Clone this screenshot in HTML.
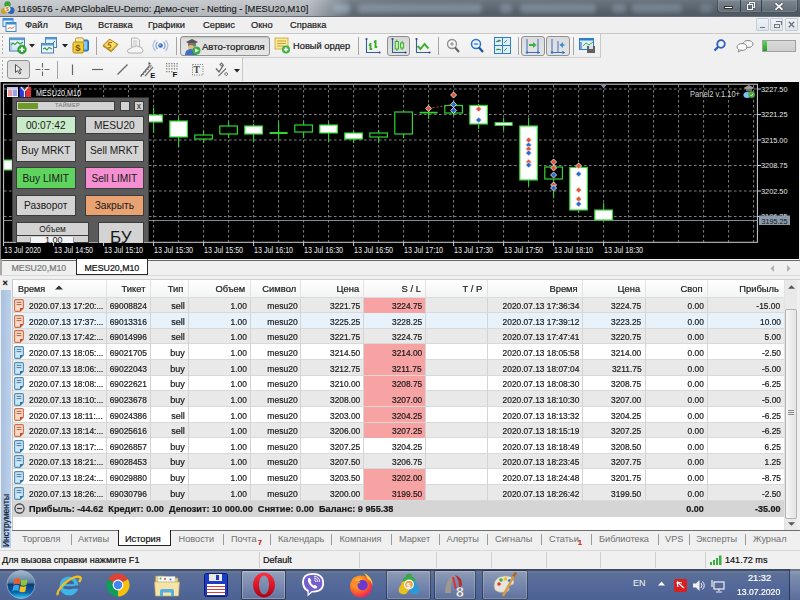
<!DOCTYPE html><html><head><meta charset="utf-8"><style>

*{box-sizing:border-box}
html,body{margin:0;padding:0;width:800px;height:600px;overflow:hidden;background:#f0f0f0;font-family:"Liberation Sans",sans-serif;color:#000}
.ab{position:absolute}
.t{position:absolute;white-space:pre;line-height:1;-webkit-text-stroke:0.22px currentColor}
svg{position:absolute;overflow:visible}

</style></head><body>
<div class="ab" style="left:0;top:0;width:800px;height:17px;background:linear-gradient(90deg,#c3c7cb 0px,#bec2c6 260px,#b2b8bd 310px,#8a939b 332px,#626d77 352px,#5a6570 420px,#57626c 600px,#535e69 800px)"></div>
<div class="ab" style="left:0;top:0;width:800px;height:17px;background:linear-gradient(180deg,rgba(255,255,255,0.12),rgba(0,0,0,0.04) 75%,rgba(0,0,0,0.08))"></div>
<div class="ab" style="left:0;top:15.5px;width:800px;height:1.5px;background:#686e76"></div>
<div class="ab" style="left:333px;top:4px;width:17px;height:9px;border-radius:4px;background:rgba(175,195,215,0.45);filter:blur(2.2px)"></div>
<div class="ab" style="left:358px;top:4px;width:124px;height:9px;border-radius:4px;background:rgba(175,195,215,0.38);filter:blur(2.2px)"></div>
<div class="ab" style="left:500px;top:4px;width:12px;height:9px;border-radius:4px;background:rgba(175,195,215,0.35);filter:blur(2.2px)"></div>
<div class="ab" style="left:520px;top:4px;width:76px;height:9px;border-radius:4px;background:rgba(175,195,215,0.35);filter:blur(2.2px)"></div>
<div class="ab" style="left:612px;top:4px;width:14px;height:9px;border-radius:4px;background:rgba(175,195,215,0.3);filter:blur(2.2px)"></div>
<div class="ab" style="left:632px;top:4px;width:50px;height:9px;border-radius:4px;background:rgba(175,195,215,0.3);filter:blur(2.2px)"></div>
<div class="ab" style="left:700px;top:4px;width:12px;height:9px;border-radius:4px;background:rgba(175,195,215,0.25);filter:blur(2.2px)"></div>
<div class="t" style="left:17px;top:5px;font-size:9.35px;color:#161616;-webkit-text-stroke:0.1px #161616">1169576 - AMPGlobalEU-Demo: Демо-счет - Netting - [MESU20,M10]</div>
<svg style="left:1px;top:1px" width="14" height="14" viewBox="0 0 14 14"><circle cx="3" cy="10" r="3" fill="#c9a227"/><circle cx="10" cy="9.5" r="3.5" fill="#2a64b8"/><circle cx="6.5" cy="3.5" r="3.2" fill="#3aa23a"/><circle cx="6.5" cy="8" r="3" fill="#f2e6c8"/><text x="5" y="10" font-size="5" fill="#c06020" font-family="Liberation Sans">$</text></svg>
<div class="ab" style="left:717px;top:0;width:81px;height:13px;border:1px solid rgba(40,50,60,0.6);border-top:none;border-radius:0 0 4px 4px;background:linear-gradient(180deg,#7d8791,#626c77);box-shadow:inset 0 0 0 1px rgba(255,255,255,0.12)"></div>
<div class="ab" style="left:740px;top:0;width:1px;height:12px;background:rgba(30,40,50,0.7)"></div>
<div class="ab" style="left:761px;top:0;width:1px;height:12px;background:rgba(30,40,50,0.7)"></div>
<div class="ab" style="left:724px;top:6px;width:9px;height:3px;background:#fff;border:1px solid #333"></div>
<div class="ab" style="left:749px;top:2px;width:6px;height:6px;border:1.3px solid #fff;box-shadow:0 0 1px #222"></div><div class="ab" style="left:747px;top:4px;width:6px;height:6px;border:1.3px solid #fff;background:#606a74;box-shadow:0 0 1px #222"></div>
<svg style="left:774px;top:2px" width="10" height="9"><path d="M1.5 1.2 L8.5 7.8 M8.5 1.2 L1.5 7.8" stroke="#3a424a" stroke-width="3.2"/><path d="M1.5 1.2 L8.5 7.8 M8.5 1.2 L1.5 7.8" stroke="#f4f4f4" stroke-width="1.9"/></svg>
<div class="ab" style="left:0;top:17px;width:800px;height:16px;background:#efeff0"></div>
<div class="ab" style="left:0;top:32.5px;width:800px;height:1.2px;background:#c8c8c8"></div>
<svg style="left:2px;top:18px" width="15" height="14" viewBox="0 0 15 14"><rect x="1" y="0.5" width="10" height="8" fill="#dff0fb" stroke="#3e8ad6"/><rect x="1" y="0.5" width="10" height="2" fill="#3e8ad6"/><rect x="4" y="4.5" width="10" height="9" fill="#fff" stroke="#3f8ad0"/><rect x="4" y="4.5" width="10" height="2" fill="#3f8ad0"/><path d="M5.5 11 L8 9.5 L10 10.5 L12.5 8.5" stroke="#e07040" fill="none"/></svg>
<div class="t" style="left:25px;top:21px;font-size:9.3px;color:#1e1e1e">Файл</div>
<div class="t" style="left:65px;top:21px;font-size:9.3px;color:#1e1e1e">Вид</div>
<div class="t" style="left:98px;top:21px;font-size:9.3px;color:#1e1e1e">Вставка</div>
<div class="t" style="left:148px;top:21px;font-size:9.3px;color:#1e1e1e">Графики</div>
<div class="t" style="left:203px;top:21px;font-size:9.3px;color:#1e1e1e">Сервис</div>
<div class="t" style="left:251px;top:21px;font-size:9.3px;color:#1e1e1e">Окно</div>
<div class="t" style="left:290px;top:21px;font-size:9.3px;color:#1e1e1e">Справка</div>
<div class="ab" style="left:756px;top:18px;width:13px;height:13px;background:linear-gradient(180deg,#eef3f8,#dbe5ee);border:1px solid #c3ccd6;border-radius:1px"></div>
<div class="ab" style="left:770px;top:18px;width:13px;height:13px;background:linear-gradient(180deg,#eef3f8,#dbe5ee);border:1px solid #c3ccd6;border-radius:1px"></div>
<div class="ab" style="left:785px;top:18px;width:13px;height:13px;background:linear-gradient(180deg,#eef3f8,#dbe5ee);border:1px solid #c3ccd6;border-radius:1px"></div>
<div class="ab" style="left:760px;top:26.5px;width:5px;height:1.5px;background:#777"></div>
<div class="ab" style="left:774px;top:23.5px;width:6px;height:4px;border:1px solid #777"></div><div class="ab" style="left:776px;top:21px;width:6px;height:4px;border-top:1px solid #777;border-right:1px solid #777"></div>
<svg style="left:788px;top:21px" width="7" height="7"><path d="M0.8 0.8 L6.2 6.2 M6.2 0.8 L0.8 6.2" stroke="#707070" stroke-width="1.3"/></svg>
<div class="ab" style="left:0;top:34px;width:601px;height:24px;background:linear-gradient(180deg,#f7f7f7,#efefef);border-right:1px solid #c8c8c8;border-bottom:1px solid #d0d0d0"></div>
<div class="ab" style="left:0;top:58px;width:243px;height:24px;background:linear-gradient(180deg,#f7f7f7,#efefef);border-right:1px solid #c8c8c8"></div>
<div class="ab" style="left:2px;top:36px;width:1px;height:2px;background:#a8a8a8"></div>
<div class="ab" style="left:2px;top:40px;width:1px;height:2px;background:#a8a8a8"></div>
<div class="ab" style="left:2px;top:44px;width:1px;height:2px;background:#a8a8a8"></div>
<div class="ab" style="left:2px;top:48px;width:1px;height:2px;background:#a8a8a8"></div>
<div class="ab" style="left:2px;top:52px;width:1px;height:2px;background:#a8a8a8"></div>
<div class="ab" style="left:2px;top:60px;width:1px;height:2px;background:#a8a8a8"></div>
<div class="ab" style="left:2px;top:64px;width:1px;height:2px;background:#a8a8a8"></div>
<div class="ab" style="left:2px;top:68px;width:1px;height:2px;background:#a8a8a8"></div>
<div class="ab" style="left:2px;top:72px;width:1px;height:2px;background:#a8a8a8"></div>
<div class="ab" style="left:2px;top:76px;width:1px;height:2px;background:#a8a8a8"></div>
<div class="ab" style="left:96px;top:37px;width:1px;height:18px;background:#a4a4a4"></div>
<div class="ab" style="left:176px;top:37px;width:1px;height:18px;background:#a4a4a4"></div>
<div class="ab" style="left:358px;top:37px;width:1px;height:18px;background:#a4a4a4"></div>
<div class="ab" style="left:438px;top:37px;width:1px;height:18px;background:#a4a4a4"></div>
<div class="ab" style="left:518px;top:37px;width:1px;height:18px;background:#a4a4a4"></div>
<div class="ab" style="left:573px;top:37px;width:1px;height:18px;background:#a4a4a4"></div>
<div class="ab" style="left:57px;top:61px;width:1px;height:18px;background:#a4a4a4"></div>
<svg style="left:8px;top:37px" width="19" height="17" viewBox="0 0 19 17"><defs><linearGradient id="wg" x1="0" y1="0" x2="0" y2="1"><stop offset="0" stop-color="#f4faff"/><stop offset="1" stop-color="#cfe4f6"/></linearGradient></defs><rect x="1.5" y="1" width="15" height="13" fill="url(#wg)" stroke="#4a7fb8"/><rect x="1.5" y="1" width="15" height="2.2" fill="#5a9ad8"/><path d="M3 8 L5 6 L7 7.5 L9.5 5 L12 7 L15 5" stroke="#3a9a3a" fill="none" stroke-width="1.1"/><path d="M3 5v8" stroke="#7a9ab8" stroke-width="0.8"/><circle cx="14" cy="12.5" r="4.3" fill="#2ea82e" stroke="#1e801e" stroke-width="0.6"/><path d="M14 10v5M11.5 12.5h5" stroke="#fff" stroke-width="1.7"/></svg>
<svg style="left:29px;top:44px" width="6" height="4"><path d="M0 0h6l-3 3.5z" fill="#222"/></svg>
<svg style="left:40px;top:37px" width="18" height="17" viewBox="0 0 18 17"><rect x="5.5" y="0.5" width="11" height="10" fill="#e6f2fb" stroke="#4a7fb8"/><rect x="5.5" y="0.5" width="11" height="2" fill="#5a9ad8"/><path d="M8 6 L11 8 L15 4" stroke="#3a9a3a" fill="none"/><rect x="1.5" y="6.5" width="12" height="9.5" fill="#eaf4fc" stroke="#4a7fb8"/><rect x="1.5" y="6.5" width="12" height="2" fill="#5a9ad8"/><path d="M3 12 L5 11 L7 13 L9 10.5 L12 12" stroke="#3a9a3a" fill="none" stroke-width="1.1"/></svg>
<svg style="left:62px;top:44px" width="6" height="4"><path d="M0 0h6l-3 3.5z" fill="#222"/></svg>
<svg style="left:72px;top:37px" width="18" height="17" viewBox="0 0 18 17"><rect x="6.5" y="3" width="10" height="11" rx="1.5" fill="#3a90d8" stroke="#2a68a8"/><rect x="8" y="4.5" width="7" height="8" fill="#8ac8f0"/><rect x="3.5" y="0.8" width="8" height="5" rx="1.5" fill="#f8e8a0" stroke="#c0a040"/><rect x="1" y="5" width="10.5" height="11" rx="1.5" fill="#f2cc38" stroke="#b08a18"/><text x="3.3" y="14" font-size="9.5" font-weight="bold" fill="#7a5a10" font-family="Liberation Sans">$</text></svg>
<svg style="left:102px;top:37px" width="17" height="16" viewBox="0 0 17 16"><path d="M1 8.5 L7.5 2 L16 7.5 L9.5 14.5 Z" fill="#d8a828" stroke="#a07818" stroke-width="0.8"/><path d="M2.5 8 L8 3 L14.5 7.2 L9 12.8 Z" fill="#f8e070"/><path d="M1 8.5 L9.5 14.5 L9.5 15.5 L1 9.5z" fill="#b08020"/><path d="M7 5.5 h3 M7 5.5 l-0.8 2.2 q3 -0.5 2.6 2 q-0.4 1.5 -2.6 1" stroke="#a86a10" fill="none" stroke-width="1.2"/></svg>
<svg style="left:127px;top:37px" width="17" height="17" viewBox="0 0 17 17"><path d="M4.5 1 h6 l2 2 v8 h-8z" fill="#f2f2f2" stroke="#b4b4b4"/><path d="M6 4h4M6 6h4M6 8h4" stroke="#c8c8c8"/><path d="M2 16 q-2.2 -0.5 -1.2 -3 q0.8 -1.8 2.8 -1.2 q1 -2.8 4 -2 q1.8 -2 4 0 q2.8 -0.6 3.5 2.2 q1.6 1.2 0.4 3 q-0.4 1 -1.5 1 z" fill="#f6f6f6" stroke="#b0b0b0"/></svg>
<svg style="left:152px;top:37px" width="17" height="17" viewBox="0 0 17 17"><path d="M3.5 3 A7.5 7.5 0 0 0 3.5 14 M13.5 3 A7.5 7.5 0 0 1 13.5 14" stroke="#a8c0e0" fill="none" stroke-width="1.2"/><path d="M5.5 5 A4.6 4.6 0 0 0 5.5 12 M11.5 5 A4.6 4.6 0 0 1 11.5 12" stroke="#7ca0d4" fill="none" stroke-width="1.2"/><circle cx="8.5" cy="8.5" r="2.3" fill="#3a70c8"/><circle cx="8" cy="8" r="0.9" fill="#9ac0f0"/></svg>
<div class="ab" style="left:180px;top:36px;width:90px;height:20px;border:1px solid #929292;border-radius:3px;background:linear-gradient(180deg,#dedede,#e6e6e6);box-shadow:inset 0 1px 1px rgba(0,0,0,0.12)"></div>
<svg style="left:184px;top:38px" width="17" height="17" viewBox="0 0 17 17"><path d="M2 4 L8 1 L14 4 L8 7 Z" fill="#555"/><path d="M4 5 v3 q4 2 8 0 v-3" fill="#777"/><circle cx="7" cy="10" r="3" fill="#e8b878"/><path d="M1 17 q0 -6 6 -6 q6 0 6 6z" fill="#3a70c8"/><circle cx="12.5" cy="12.5" r="4" fill="#3cb043"/><path d="M11 10.5 L15 12.5 L11 14.5z" fill="#fff"/></svg>
<div class="t" style="left:202px;top:42px;font-size:9.5px;color:#1a1a1a">Авто-торговля</div>
<svg style="left:274px;top:37px" width="17" height="17" viewBox="0 0 17 17"><rect x="1" y="1" width="13" height="11" fill="#fbe9a0" stroke="#d2b040"/><path d="M3 4h9M3 6.5h9M3 9h7" stroke="#c8a030"/><circle cx="12" cy="12.5" r="4" fill="#3cb043"/><path d="M12 10.3v4.4M9.8 12.5h4.4" stroke="#fff" stroke-width="1.4"/></svg>
<div class="t" style="left:293px;top:42px;font-size:9.3px;color:#1a1a1a">Новый ордер</div>
<svg style="left:364px;top:37px" width="17" height="17" viewBox="0 0 17 17"><path d="M2.5 2v13.5H16" stroke="#3a5a98" fill="none" stroke-width="1.1"/><circle cx="2.5" cy="2" r="1.1" fill="#2a4a88"/><circle cx="15.5" cy="15.5" r="1.1" fill="#2a4a88"/><path d="M6.5 13V6M4.8 8h1.7M6.5 12h1.7M11.5 11V3M9.8 5h1.7M11.5 10h1.7" stroke="#3cae30" stroke-width="1.9" fill="none"/></svg>
<div class="ab" style="left:387px;top:36px;width:23px;height:20px;border:1px solid #8e8e8e;border-radius:3px;background:linear-gradient(180deg,#d8d8d8,#e2e2e2)"></div>
<svg style="left:390px;top:37px" width="17" height="17" viewBox="0 0 17 17"><path d="M2.5 2v13.5H16" stroke="#3a5a98" fill="none" stroke-width="1.1"/><circle cx="2.5" cy="2" r="1.1" fill="#2a4a88"/><circle cx="15.5" cy="15.5" r="1.1" fill="#2a4a88"/><rect x="5.2" y="4.5" width="3.2" height="7.5" fill="#c8f4b0" stroke="#3cae30"/><path d="M6.8 2.5v2M6.8 12v2" stroke="#3cae30"/><rect x="10.6" y="6" width="3" height="5" fill="#c8f4b0" stroke="#3cae30"/><path d="M12.1 4v2M12.1 11v2" stroke="#3cae30"/></svg>
<svg style="left:414px;top:37px" width="17" height="17" viewBox="0 0 17 17"><path d="M2.5 2v13.5H16" stroke="#3a5a98" fill="none" stroke-width="1.1"/><circle cx="2.5" cy="2" r="1.1" fill="#2a4a88"/><circle cx="15.5" cy="15.5" r="1.1" fill="#2a4a88"/><path d="M3.5 9 L6.5 12 L10.5 7 L14.5 11.5" stroke="#3cae30" stroke-width="1.9" fill="none"/></svg>
<svg style="left:446px;top:38px" width="14" height="16" viewBox="0 0 14 16"><circle cx="6" cy="6" r="4.5" fill="#f4f4f4" stroke="#909090" stroke-width="1.3"/><path d="M4 6h4M6 4v4" stroke="#909090"/><path d="M9 9.5 L13 14" stroke="#606060" stroke-width="2"/></svg>
<svg style="left:470px;top:38px" width="14" height="16" viewBox="0 0 14 16"><circle cx="6" cy="6" r="4.5" fill="#eaf2fb" stroke="#2a70c8" stroke-width="1.5"/><path d="M4 6h4" stroke="#2a70c8" stroke-width="1.2"/><path d="M9 9.5 L13 14" stroke="#2050a0" stroke-width="2.2"/></svg>
<svg style="left:494px;top:37px" width="17" height="17" viewBox="0 0 17 17"><rect x="0.5" y="0.5" width="16" height="16" fill="#dfeefa" stroke="#2a80c8"/><path d="M8.5 0.5v16M0.5 8.5h16" stroke="#2a80c8"/><path d="M2 5 l3 -2 l2 1M10 6 l3 -3M2 13 l2 -1 l3 1M10 14 l3 -3" stroke="#3cb043"/></svg>
<div class="ab" style="left:521px;top:36px;width:24px;height:20px;border:1px solid #929292;border-radius:3px;background:linear-gradient(180deg,#dcdcdc,#e4e4e4)"></div>
<div class="ab" style="left:546px;top:36px;width:24px;height:20px;border:1px solid #929292;border-radius:3px;background:linear-gradient(180deg,#dcdcdc,#e4e4e4)"></div>
<svg style="left:525px;top:38px" width="16" height="16" viewBox="0 0 16 16"><path d="M2 1v13.5H15M13 1v13" stroke="#3a70c8" fill="none"/><circle cx="2" cy="14.5" r="1.2" fill="#3a70c8"/><circle cx="13" cy="14.5" r="1.2" fill="#3a70c8"/><path d="M4 7h5" stroke="#3cb043" stroke-width="2"/><path d="M8 4 L11.5 7 L8 10z" fill="#3cb043"/></svg>
<svg style="left:550px;top:38px" width="16" height="16" viewBox="0 0 16 16"><path d="M2 1v13.5H15M8 3v11" stroke="#3a70c8" fill="none"/><circle cx="2" cy="14.5" r="1.2" fill="#3a70c8"/><circle cx="13" cy="14.5" r="1.2" fill="#3a70c8"/><path d="M10.5 7h4" stroke="#3a90d8" stroke-width="1.6"/><path d="M13 4 L9.5 7 L13 10z" fill="#3a90d8"/></svg>
<svg style="left:579px;top:37px" width="17" height="17" viewBox="0 0 17 17"><rect x="0.5" y="1.5" width="14" height="11" fill="#dfeefa" stroke="#2a80c8"/><rect x="0.5" y="1.5" width="14" height="2" fill="#2a80c8"/><path d="M4 9 l3 -3 l3 2 l4 -3" stroke="#3cb043" fill="none"/><path d="M2 5v7" stroke="#2a50a0"/><rect x="8" y="9" width="8" height="7" fill="#606060"/><rect x="10" y="9" width="4" height="3" fill="#ddd"/></svg>
<svg style="left:713px;top:39px" width="13" height="13" viewBox="0 0 13 13"><circle cx="8" cy="5" r="3.8" fill="none" stroke="#2a60c0" stroke-width="1.8"/><path d="M5.5 7.5 L1.5 11.5" stroke="#2a60c0" stroke-width="2.4"/></svg>
<svg style="left:736px;top:39px" width="18" height="13" viewBox="0 0 18 13"><ellipse cx="12" cy="5" rx="5" ry="3.5" fill="#f8f8f8" stroke="#888"/><ellipse cx="6" cy="8" rx="5" ry="3.5" fill="#fafafa" stroke="#888"/><path d="M3 11 L2 13 L6 11" fill="#fafafa" stroke="#888"/></svg>
<div class="ab" style="left:762px;top:40px;width:34px;height:12px;border:1px solid #a0a0a0;background:linear-gradient(180deg,#dadada,#cfcfcf)"></div>
<div class="ab" style="left:763px;top:41px;width:4px;height:10px;background:linear-gradient(180deg,#5fd35f,#22a022)"></div>
<div class="ab" style="left:7px;top:60px;width:23px;height:19px;border:1px solid #929292;border-radius:3px;background:linear-gradient(180deg,#dcdcdc,#e6e6e6)"></div>
<svg style="left:14px;top:63px" width="9" height="13" viewBox="0 0 9 13"><path d="M1.5 1.5 L1.5 9.5 L3.6 7.6 L5.6 11 L6.8 10.2 L5 7 L7.8 6.8 Z" fill="#f0f0f0" stroke="#505050" stroke-width="1"/></svg>
<svg style="left:34px;top:61px" width="17" height="17" viewBox="0 0 17 17"><path d="M8.5 2v4.5M8.5 10.5v4.5M1.5 8.5h5M10.5 8.5h5" stroke="#666" stroke-width="1.1"/><rect x="8" y="8" width="1" height="1" fill="#666"/></svg>
<svg style="left:70px;top:62px" width="5" height="16" viewBox="0 0 5 16"><path d="M2.5 2.5v10.5" stroke="#666" stroke-width="1.2"/></svg>
<svg style="left:91px;top:62px" width="13" height="16" viewBox="0 0 13 16"><path d="M1 7.5h11" stroke="#666" stroke-width="1.2"/></svg>
<svg style="left:116px;top:62px" width="15" height="16" viewBox="0 0 15 16"><path d="M1.5 12.5 L11.5 2.5" stroke="#666" stroke-width="1.2"/></svg>
<svg style="left:138px;top:60px" width="20" height="18" viewBox="0 0 20 18"><path d="M3 16 L12 5 M7 16 L15 7" stroke="#777" stroke-width="1.3"/><path d="M3 17 v-2.5 h2.5 v-2.5 h2.5 v-2.5 h2.5 v-2.5 h2.5 v-2.5" stroke="#666" fill="none" stroke-width="1" stroke-dasharray="1.5 0.8"/><path d="M10.5 2 L13 3.5 L10.5 5z" fill="#555"/><text x="12.2" y="17.8" font-size="7.6" font-weight="bold" fill="#111" font-family="Liberation Sans">E</text></svg>
<svg style="left:164px;top:61px" width="18" height="17" viewBox="0 0 18 17"><g fill="#808080"><rect x="2" y="2" width="1.3" height="1.3"/><rect x="4.6" y="2" width="1.3" height="1.3"/><rect x="7.2" y="2" width="1.3" height="1.3"/><rect x="9.8" y="2" width="1.3" height="1.3"/><rect x="12.4" y="2" width="1.3" height="1.3"/><rect x="2" y="4.4" width="1.3" height="1.3"/><rect x="4.6" y="4.4" width="1.3" height="1.3"/><rect x="7.2" y="4.4" width="1.3" height="1.3"/><rect x="9.8" y="4.4" width="1.3" height="1.3"/><rect x="12.4" y="4.4" width="1.3" height="1.3"/><rect x="2" y="7.2" width="1.3" height="1.3"/><rect x="4.6" y="7.2" width="1.3" height="1.3"/><rect x="7.2" y="7.2" width="1.3" height="1.3"/><rect x="9.8" y="7.2" width="1.3" height="1.3"/><rect x="12.4" y="7.2" width="1.3" height="1.3"/><rect x="2" y="10" width="1.3" height="1.3"/><rect x="4.6" y="10" width="1.3" height="1.3"/><rect x="7.2" y="10" width="1.3" height="1.3"/></g><text x="8.6" y="15.6" font-size="8" font-weight="bold" fill="#111" font-family="Liberation Sans">F</text></svg>
<svg style="left:190px;top:62px" width="16" height="16" viewBox="0 0 16 16"><rect x="2.5" y="2.5" width="10.5" height="10.5" fill="none" stroke="#888" stroke-dasharray="1.2 1.2"/><text x="3.6" y="10.6" font-size="9.5" font-weight="bold" fill="#444" font-family="Liberation Serif">T</text></svg>
<svg style="left:214px;top:62px" width="16" height="16" viewBox="0 0 16 16"><path d="M2 6.5 L5 10 L9.5 3" stroke="#666" fill="none" stroke-width="1.3"/><path d="M6 2.5 l1.5 -1.5 l1.5 1.5 l-1.5 1.5z M4.5 14 L12 6.5" stroke="#777" fill="none" stroke-width="1.1"/><path d="M10.5 12 l1.7 -1.7 l1.7 1.7 l-1.7 1.7z" stroke="#666" fill="none" stroke-width="1"/></svg>
<svg style="left:234px;top:69px" width="6" height="4"><path d="M0 0h6l-3 3.5z" fill="#222"/></svg>
<div class="ab" style="left:0;top:81px;width:800px;height:178px;background:#f0f0f0"></div>
<div class="ab" style="left:0;top:82px;width:799px;height:177px;background:#000;border-left:1px solid #7a7a7a"></div>
<svg style="left:0;top:81px" width="800" height="178" viewBox="0 0 800 178"><path d="M28.6 4 V161" stroke="#8c8c8c" stroke-width="0.9" stroke-dasharray="2.6 2.4"/><path d="M53.6 4 V161" stroke="#8c8c8c" stroke-width="0.9" stroke-dasharray="2.6 2.4"/><path d="M78.6 4 V161" stroke="#8c8c8c" stroke-width="0.9" stroke-dasharray="2.6 2.4"/><path d="M103.6 4 V161" stroke="#8c8c8c" stroke-width="0.9" stroke-dasharray="2.6 2.4"/><path d="M128.6 4 V161" stroke="#8c8c8c" stroke-width="0.9" stroke-dasharray="2.6 2.4"/><path d="M153.6 4 V161" stroke="#8c8c8c" stroke-width="0.9" stroke-dasharray="2.6 2.4"/><path d="M178.6 4 V161" stroke="#8c8c8c" stroke-width="0.9" stroke-dasharray="2.6 2.4"/><path d="M203.6 4 V161" stroke="#8c8c8c" stroke-width="0.9" stroke-dasharray="2.6 2.4"/><path d="M228.6 4 V161" stroke="#8c8c8c" stroke-width="0.9" stroke-dasharray="2.6 2.4"/><path d="M253.6 4 V161" stroke="#8c8c8c" stroke-width="0.9" stroke-dasharray="2.6 2.4"/><path d="M278.6 4 V161" stroke="#8c8c8c" stroke-width="0.9" stroke-dasharray="2.6 2.4"/><path d="M303.6 4 V161" stroke="#8c8c8c" stroke-width="0.9" stroke-dasharray="2.6 2.4"/><path d="M328.6 4 V161" stroke="#8c8c8c" stroke-width="0.9" stroke-dasharray="2.6 2.4"/><path d="M353.6 4 V161" stroke="#8c8c8c" stroke-width="0.9" stroke-dasharray="2.6 2.4"/><path d="M378.6 4 V161" stroke="#8c8c8c" stroke-width="0.9" stroke-dasharray="2.6 2.4"/><path d="M403.6 4 V161" stroke="#8c8c8c" stroke-width="0.9" stroke-dasharray="2.6 2.4"/><path d="M428.6 4 V161" stroke="#8c8c8c" stroke-width="0.9" stroke-dasharray="2.6 2.4"/><path d="M453.6 4 V161" stroke="#8c8c8c" stroke-width="0.9" stroke-dasharray="2.6 2.4"/><path d="M478.6 4 V161" stroke="#8c8c8c" stroke-width="0.9" stroke-dasharray="2.6 2.4"/><path d="M503.6 4 V161" stroke="#8c8c8c" stroke-width="0.9" stroke-dasharray="2.6 2.4"/><path d="M528.6 4 V161" stroke="#8c8c8c" stroke-width="0.9" stroke-dasharray="2.6 2.4"/><path d="M553.6 4 V161" stroke="#8c8c8c" stroke-width="0.9" stroke-dasharray="2.6 2.4"/><path d="M578.6 4 V161" stroke="#8c8c8c" stroke-width="0.9" stroke-dasharray="2.6 2.4"/><path d="M603.6 4 V161" stroke="#8c8c8c" stroke-width="0.9" stroke-dasharray="2.6 2.4"/><path d="M628.6 4 V161" stroke="#8c8c8c" stroke-width="0.9" stroke-dasharray="2.6 2.4"/><path d="M653.6 4 V161" stroke="#8c8c8c" stroke-width="0.9" stroke-dasharray="2.6 2.4"/><path d="M678.6 4 V161" stroke="#8c8c8c" stroke-width="0.9" stroke-dasharray="2.6 2.4"/><path d="M703.6 4 V161" stroke="#8c8c8c" stroke-width="0.9" stroke-dasharray="2.6 2.4"/><path d="M728.6 4 V161" stroke="#8c8c8c" stroke-width="0.9" stroke-dasharray="2.6 2.4"/><path d="M753.6 4 V161" stroke="#8c8c8c" stroke-width="0.9" stroke-dasharray="2.6 2.4"/><path d="M4 8 H757" stroke="#8c8c8c" stroke-width="0.9" stroke-dasharray="2.6 2.4"/><path d="M4 33.5 H757" stroke="#8c8c8c" stroke-width="0.9" stroke-dasharray="2.6 2.4"/><path d="M4 59 H757" stroke="#8c8c8c" stroke-width="0.9" stroke-dasharray="2.6 2.4"/><path d="M4 84.5 H757" stroke="#8c8c8c" stroke-width="0.9" stroke-dasharray="2.6 2.4"/><path d="M4 110 H757" stroke="#8c8c8c" stroke-width="0.9" stroke-dasharray="2.6 2.4"/><path d="M4 135.5 H757" stroke="#8c8c8c" stroke-width="0.9" stroke-dasharray="2.6 2.4"/><path d="M4 139.5 H757" stroke="#a4aeb8" stroke-width="0.8"/><rect x="3.6" y="3.200000000000003" width="753.8" height="158.10000000000002" fill="none" stroke="#cfcfcf" stroke-width="1"/><path d="M757.5 8 H761" stroke="#cfcfcf"/><text x="761" y="10.7" font-size="7.6" fill="#e8e8e8" font-family="Liberation Sans" textLength="26.5" lengthAdjust="spacingAndGlyphs">3227.50</text><path d="M757.5 33.5 H761" stroke="#cfcfcf"/><text x="761" y="36.2" font-size="7.6" fill="#e8e8e8" font-family="Liberation Sans" textLength="26.5" lengthAdjust="spacingAndGlyphs">3221.25</text><path d="M757.5 59 H761" stroke="#cfcfcf"/><text x="761" y="61.7" font-size="7.6" fill="#e8e8e8" font-family="Liberation Sans" textLength="26.5" lengthAdjust="spacingAndGlyphs">3215.00</text><path d="M757.5 84.5 H761" stroke="#cfcfcf"/><text x="761" y="87.2" font-size="7.6" fill="#e8e8e8" font-family="Liberation Sans" textLength="26.5" lengthAdjust="spacingAndGlyphs">3208.75</text><path d="M757.5 110 H761" stroke="#cfcfcf"/><text x="761" y="112.7" font-size="7.6" fill="#e8e8e8" font-family="Liberation Sans" textLength="26.5" lengthAdjust="spacingAndGlyphs">3202.50</text><path d="M757.5 135.5 H761" stroke="#cfcfcf"/><text x="761" y="138.2" font-size="7.6" fill="#e8e8e8" font-family="Liberation Sans" textLength="26.5" lengthAdjust="spacingAndGlyphs">3196.25</text><path d="M3.6 161 V165" stroke="#cfcfcf"/><text x="4.1" y="172" font-size="8.3" fill="#ececec" font-family="Liberation Sans" textLength="37" lengthAdjust="spacingAndGlyphs">13 Jul 2020</text><path d="M53.6 161 V165" stroke="#cfcfcf"/><text x="54.1" y="172" font-size="8.3" fill="#ececec" font-family="Liberation Sans" textLength="39" lengthAdjust="spacingAndGlyphs">13 Jul 14:50</text><path d="M103.6 161 V165" stroke="#cfcfcf"/><text x="104.1" y="172" font-size="8.3" fill="#ececec" font-family="Liberation Sans" textLength="39" lengthAdjust="spacingAndGlyphs">13 Jul 15:10</text><path d="M153.6 161 V165" stroke="#cfcfcf"/><text x="154.1" y="172" font-size="8.3" fill="#ececec" font-family="Liberation Sans" textLength="39" lengthAdjust="spacingAndGlyphs">13 Jul 15:30</text><path d="M203.6 161 V165" stroke="#cfcfcf"/><text x="204.1" y="172" font-size="8.3" fill="#ececec" font-family="Liberation Sans" textLength="39" lengthAdjust="spacingAndGlyphs">13 Jul 15:50</text><path d="M253.6 161 V165" stroke="#cfcfcf"/><text x="254.1" y="172" font-size="8.3" fill="#ececec" font-family="Liberation Sans" textLength="39" lengthAdjust="spacingAndGlyphs">13 Jul 16:10</text><path d="M303.6 161 V165" stroke="#cfcfcf"/><text x="304.1" y="172" font-size="8.3" fill="#ececec" font-family="Liberation Sans" textLength="39" lengthAdjust="spacingAndGlyphs">13 Jul 16:30</text><path d="M353.6 161 V165" stroke="#cfcfcf"/><text x="354.1" y="172" font-size="8.3" fill="#ececec" font-family="Liberation Sans" textLength="39" lengthAdjust="spacingAndGlyphs">13 Jul 16:50</text><path d="M403.6 161 V165" stroke="#cfcfcf"/><text x="404.1" y="172" font-size="8.3" fill="#ececec" font-family="Liberation Sans" textLength="39" lengthAdjust="spacingAndGlyphs">13 Jul 17:10</text><path d="M453.6 161 V165" stroke="#cfcfcf"/><text x="454.1" y="172" font-size="8.3" fill="#ececec" font-family="Liberation Sans" textLength="39" lengthAdjust="spacingAndGlyphs">13 Jul 17:30</text><path d="M503.6 161 V165" stroke="#cfcfcf"/><text x="504.1" y="172" font-size="8.3" fill="#ececec" font-family="Liberation Sans" textLength="39" lengthAdjust="spacingAndGlyphs">13 Jul 17:50</text><path d="M553.6 161 V165" stroke="#cfcfcf"/><text x="554.1" y="172" font-size="8.3" fill="#ececec" font-family="Liberation Sans" textLength="39" lengthAdjust="spacingAndGlyphs">13 Jul 18:10</text><path d="M603.6 161 V165" stroke="#cfcfcf"/><text x="604.1" y="172" font-size="8.3" fill="#ececec" font-family="Liberation Sans" textLength="39" lengthAdjust="spacingAndGlyphs">13 Jul 18:30</text><defs><clipPath id="clipc"><rect x="4.1" y="3.700000000000003" width="752.8" height="157.10000000000002"/></clipPath></defs><g clip-path="url(#clipc)"><path d="M3.6 79 V89" stroke="#2fd62f" stroke-width="1.1"/><rect x="-5.200000000000001" y="79" width="17.6" height="10" fill="#ffffff" stroke="#2fd62f" stroke-width="1.2"/><path d="M153.6 27 V52" stroke="#2fd62f" stroke-width="1.1"/><rect x="144.79999999999998" y="34" width="17.6" height="7" fill="#ffffff" stroke="#2fd62f" stroke-width="1.2"/><path d="M178.6 36 V66" stroke="#2fd62f" stroke-width="1.1"/><rect x="169.79999999999998" y="40" width="17.6" height="16" fill="#ffffff" stroke="#2fd62f" stroke-width="1.2"/><path d="M203.6 50 V62" stroke="#2fd62f" stroke-width="1.1"/><rect x="194.79999999999998" y="54" width="17.6" height="4" fill="#000000" stroke="#2fd62f" stroke-width="1.2"/><path d="M228.6 41 V57" stroke="#2fd62f" stroke-width="1.1"/><rect x="219.79999999999998" y="45" width="17.6" height="8" fill="#000000" stroke="#2fd62f" stroke-width="1.2"/><path d="M253.6 43 V61" stroke="#2fd62f" stroke-width="1.1"/><rect x="244.79999999999998" y="45" width="17.6" height="8" fill="#ffffff" stroke="#2fd62f" stroke-width="1.2"/><path d="M278.6 41 V59" stroke="#2fd62f" stroke-width="1.1"/><path d="M269.6 52 H287.6" stroke="#2fd62f" stroke-width="1.8"/><path d="M303.6 41 V57" stroke="#2fd62f" stroke-width="1.1"/><rect x="294.8" y="44" width="17.6" height="7" fill="#000000" stroke="#2fd62f" stroke-width="1.2"/><path d="M328.6 41 V61" stroke="#2fd62f" stroke-width="1.1"/><rect x="319.8" y="44" width="17.6" height="8" fill="#ffffff" stroke="#2fd62f" stroke-width="1.2"/><path d="M353.6 50 V62" stroke="#2fd62f" stroke-width="1.1"/><rect x="344.8" y="52" width="17.6" height="6" fill="#ffffff" stroke="#2fd62f" stroke-width="1.2"/><path d="M378.6 49 V62" stroke="#2fd62f" stroke-width="1.1"/><rect x="369.8" y="52" width="17.6" height="4" fill="#000000" stroke="#2fd62f" stroke-width="1.2"/><path d="M403.6 30 V57" stroke="#2fd62f" stroke-width="1.1"/><rect x="394.8" y="31" width="17.6" height="22" fill="#000000" stroke="#2fd62f" stroke-width="1.2"/><path d="M428.6 23 V38" stroke="#2fd62f" stroke-width="1.1"/><path d="M419.6 31.700000000000003 H437.6" stroke="#2fd62f" stroke-width="1.8"/><path d="M453.6 22 V35" stroke="#2fd62f" stroke-width="1.1"/><rect x="444.8" y="24.5" width="17.6" height="7.5" fill="#000000" stroke="#2fd62f" stroke-width="1.2"/><path d="M478.6 23 V48" stroke="#2fd62f" stroke-width="1.1"/><rect x="469.8" y="24.5" width="17.6" height="18.5" fill="#ffffff" stroke="#2fd62f" stroke-width="1.2"/><path d="M503.6 37 V49" stroke="#2fd62f" stroke-width="1.1"/><rect x="495.1" y="41.5" width="17" height="3" fill="#fff" stroke="#2fd62f" stroke-width="1"/><path d="M528.6 37 V105" stroke="#2fd62f" stroke-width="1.1"/><rect x="519.8000000000001" y="45" width="17.6" height="54" fill="#ffffff" stroke="#2fd62f" stroke-width="1.2"/><path d="M553.6 79 V117" stroke="#2fd62f" stroke-width="1.1"/><rect x="544.8000000000001" y="86" width="17.6" height="12" fill="#000000" stroke="#2fd62f" stroke-width="1.2"/><path d="M578.6 82 V132" stroke="#2fd62f" stroke-width="1.1"/><rect x="569.8000000000001" y="86.5" width="17.6" height="42.5" fill="#ffffff" stroke="#2fd62f" stroke-width="1.2"/><path d="M603.6 122 V140" stroke="#2fd62f" stroke-width="1.1"/><rect x="594.8000000000001" y="129" width="17.6" height="10" fill="#ffffff" stroke="#2fd62f" stroke-width="1.2"/></g><path d="M428.6 27.5 L453.6 23.5" stroke="#d06040" stroke-dasharray="2 2" stroke-width="0.9"/><path d="M428.6 24.5 L431.6 27.5 L428.6 30.5 L425.6 27.5 Z" fill="#e2553a" stroke="#f4f4f4" stroke-width="0.8"/><path d="M453.6 11 L456.6 14 L453.6 17 L450.6 14 Z" fill="#e2553a" stroke="#f4f4f4" stroke-width="0.8"/><path d="M453.6 20.5 L456.6 23.5 L453.6 26.5 L450.6 23.5 Z" fill="#2a6ac8" stroke="#f4f4f4" stroke-width="0.8"/><path d="M453.6 26.5 L456.6 29.5 L453.6 32.5 L450.6 29.5 Z" fill="#2a6ac8" stroke="#f4f4f4" stroke-width="0.8"/><path d="M478.6 25 L481.6 28 L478.6 31 L475.6 28 Z" fill="#e2553a" stroke="#f4f4f4" stroke-width="0.8"/><path d="M478.6 36 L481.6 39 L478.6 42 L475.6 39 Z" fill="#2a6ac8" stroke="#f4f4f4" stroke-width="0.8"/><path d="M528.6 56 L531.6 59 L528.6 62 L525.6 59 Z" fill="#e2553a" stroke="#f4f4f4" stroke-width="0.8"/><path d="M528.6 61 L531.6 64 L528.6 67 L525.6 64 Z" fill="#2a6ac8" stroke="#f4f4f4" stroke-width="0.8"/><path d="M528.6 65 L531.6 68 L528.6 71 L525.6 68 Z" fill="#e2553a" stroke="#f4f4f4" stroke-width="0.8"/><path d="M528.6 69 L531.6 72 L528.6 75 L525.6 72 Z" fill="#2a6ac8" stroke="#f4f4f4" stroke-width="0.8"/><path d="M528.6 78 L531.6 81 L528.6 84 L525.6 81 Z" fill="#e2553a" stroke="#f4f4f4" stroke-width="0.8"/><path d="M528.6 81 L531.6 84 L528.6 87 L525.6 84 Z" fill="#2a6ac8" stroke="#f4f4f4" stroke-width="0.8"/><path d="M553.6 78 L556.6 81 L553.6 84 L550.6 81 Z" fill="#e2553a" stroke="#f4f4f4" stroke-width="0.8"/><path d="M553.6 84 L556.6 87 L553.6 90 L550.6 87 Z" fill="#e2553a" stroke="#f4f4f4" stroke-width="0.8"/><path d="M553.6 91 L556.6 94 L553.6 97 L550.6 94 Z" fill="#2a6ac8" stroke="#f4f4f4" stroke-width="0.8"/><path d="M553.6 101 L556.6 104 L553.6 107 L550.6 104 Z" fill="#e2553a" stroke="#f4f4f4" stroke-width="0.8"/><path d="M553.6 104 L556.6 107 L553.6 110 L550.6 107 Z" fill="#2a6ac8" stroke="#f4f4f4" stroke-width="0.8"/><path d="M578.6 82 L581.6 85 L578.6 88 L575.6 85 Z" fill="#e2553a" stroke="#f4f4f4" stroke-width="0.8"/><path d="M578.6 90 L581.6 93 L578.6 96 L575.6 93 Z" fill="#2a6ac8" stroke="#f4f4f4" stroke-width="0.8"/><path d="M578.6 106 L581.6 109 L578.6 112 L575.6 109 Z" fill="#e2553a" stroke="#f4f4f4" stroke-width="0.8"/><path d="M578.6 115 L581.6 118 L578.6 121 L575.6 118 Z" fill="#e2553a" stroke="#f4f4f4" stroke-width="0.8"/><path d="M578.6 120 L581.6 123 L578.6 126 L575.6 123 Z" fill="#2a6ac8" stroke="#f4f4f4" stroke-width="0.8"/><rect x="759" y="134.5" width="31" height="9.5" fill="#8a9bab"/><text x="761.5" y="142.7" font-size="7.6" fill="#101820" font-family="Liberation Sans" textLength="26" lengthAdjust="spacingAndGlyphs">3195.25</text><path d="M600 3 L607.2 3 L603.6 7.5 Z" fill="#8090a0"/><text x="690" y="15.5" font-size="8.4" fill="#d4d4d4" font-family="Liberation Sans" textLength="50" lengthAdjust="spacingAndGlyphs">Panel2 v.1.10+</text><path d="M743.5 7 L749 4 L754.5 7 L749 9.5Z" fill="#9a9a9a"/><path d="M746 8 v2 q3 1.5 6 0 v-2" fill="#707070"/><ellipse cx="747.2" cy="14" rx="3.8" ry="3" fill="#7ac0f0"/><circle cx="751.6" cy="13.599999999999994" r="3.3" fill="#4cae3a"/><path d="M750.5 14 l1 1 l1.6 -2.4" stroke="#e8f8e0" stroke-width="0.8" fill="none"/><rect x="7" y="6" width="11" height="10" fill="#f4f4f4"/><rect x="8" y="8.5" width="4.3" height="6.5" fill="#e89a9a"/><rect x="12.8" y="8.5" width="4.2" height="6.5" fill="#9aa4e8"/><rect x="7" y="6" width="11" height="1.8" fill="#b8c0f0"/><path d="M19.5 6 h5 v10 h-5z" fill="#2a3ae0"/><path d="M25.5 6 h5.5 v10 h-5.5z" fill="#e03030"/><path d="M21 6 l3.5 4 l3.5 -4 M24.5 10 v6" stroke="#e8e8e8" stroke-width="1.2" fill="none"/><text x="36" y="15.299999999999997" font-size="8.6" fill="#f4f4f4" font-family="Liberation Sans" textLength="45" lengthAdjust="spacingAndGlyphs">MESU20,M10</text></svg>
<div class="ab" style="left:12px;top:96.7px;width:136.7px;height:145.5px;background:#5a5a5a;border-top:1px solid #2a2a2a;border-left:1px solid #3a3a3a;border-right:1px solid #3a3a3a"></div>
<div class="ab" style="left:16px;top:100.7px;width:99px;height:10px;background:#d3d3d3;border:1px solid #3c3c3c"></div>
<div class="ab" style="left:18px;top:102.5px;width:20px;height:6.5px;background:#6e9a26"></div>
<div class="t" style="left:55px;top:103.2px;font-size:5.5px;color:#8a8a8a;letter-spacing:0.4px">ТАЙМЕР</div>
<div class="ab" style="left:119.5px;top:101px;width:10.5px;height:10px;background:#d3d3d3;border:1px solid #3c3c3c;display:flex;align-items:center;justify-content:center;font-size:8px;color:#1a1a1a;white-space:pre;"></div>
<div class="ab" style="left:133.7px;top:101px;width:10.5px;height:10px;background:#d3d3d3;border:1px solid #3c3c3c;display:flex;align-items:center;justify-content:center;font-size:8.5px;color:#1a1a1a;white-space:pre;">x</div>
<div class="ab" style="left:16px;top:116px;width:59.5px;height:18px;background:#c9ebca;border:1px solid #3c3c3c;display:flex;align-items:center;justify-content:center;font-size:10.2px;color:#1a1a1a;white-space:pre;">00:07:42</div>
<div class="ab" style="left:84.5px;top:116px;width:59.69999999999999px;height:18px;background:#d3d3d3;border:1px solid #3c3c3c;display:flex;align-items:center;justify-content:center;font-size:10.2px;color:#1a1a1a;white-space:pre;">MESU20</div>
<div class="ab" style="left:16px;top:140px;width:59.5px;height:21.69999999999999px;background:#d3d3d3;border:1px solid #3c3c3c;display:flex;align-items:center;justify-content:center;font-size:10.2px;color:#1a1a1a;white-space:pre;">Buy MRKT</div>
<div class="ab" style="left:84.5px;top:140px;width:59.69999999999999px;height:21.69999999999999px;background:#d3d3d3;border:1px solid #3c3c3c;display:flex;align-items:center;justify-content:center;font-size:10.2px;color:#1a1a1a;white-space:pre;">Sell MRKT</div>
<div class="ab" style="left:16px;top:167px;width:59.5px;height:22px;background:#5ed35e;border:1px solid #3c3c3c;display:flex;align-items:center;justify-content:center;font-size:10.2px;color:#1a1a1a;white-space:pre;">Buy LIMIT</div>
<div class="ab" style="left:84.5px;top:167px;width:59.69999999999999px;height:22px;background:#f48fd1;border:1px solid #3c3c3c;display:flex;align-items:center;justify-content:center;font-size:10.2px;color:#1a1a1a;white-space:pre;">Sell LIMIT</div>
<div class="ab" style="left:16px;top:194.5px;width:59.5px;height:21.5px;background:#d3d3d3;border:1px solid #3c3c3c;display:flex;align-items:center;justify-content:center;font-size:10.2px;color:#1a1a1a;white-space:pre;">Разворот</div>
<div class="ab" style="left:84.5px;top:194.5px;width:59.69999999999999px;height:21.5px;background:#e9a272;border:1px solid #3c3c3c;display:flex;align-items:center;justify-content:center;font-size:10.2px;color:#1a1a1a;white-space:pre;">Закрыть</div>
<div class="ab" style="left:16px;top:221.5px;width:73px;height:14.5px;background:#d3d3d3;border:1px solid #3c3c3c;display:flex;align-items:center;justify-content:center;font-size:8.3px;color:#1a1a1a;white-space:pre;">Объем</div>
<div class="ab" style="left:16px;top:236px;width:73px;height:7px;background:#d3d3d3;border:1px solid #3c3c3c;border-top:none"></div>
<div class="ab" style="left:30px;top:237px;width:44px;height:6px;background:#f4f4f4;border-left:1px solid #999;border-right:1px solid #999;overflow:hidden"><div style="position:absolute;left:14px;top:-2px;font-size:9px;color:#222">1.00</div></div>
<div class="ab" style="left:98px;top:222px;width:46.2px;height:21px;background:#d3d3d3;border:1px solid #3c3c3c;border-bottom:none;overflow:hidden"><div style="position:absolute;left:11px;top:5.5px;font-size:17px;color:#1a1a1a;line-height:1">БУ</div></div>
<div class="ab" style="left:0;top:258.5px;width:800px;height:1px;background:#f4f4f4"></div>
<div class="ab" style="left:0;top:259.5px;width:800px;height:15.5px;background:#f0f0f0;border-top:1px solid #6a6a6a"></div>
<div class="ab" style="left:0;top:259px;width:2px;height:17px;background:#a8a8a8"></div>
<div class="t" style="left:11.5px;top:264px;font-size:8.8px;color:#7a7a7a">MESU20,M10</div>
<div class="ab" style="left:76px;top:259px;width:72px;height:16px;background:#fff;border:1px solid #2a2a2a;border-top:none"></div>
<div class="t" style="left:84.5px;top:264px;font-size:8.8px;color:#111">MESU20,M10</div>
<div class="ab" style="left:0;top:275px;width:800px;height:1px;background:#d8d8d8"></div>
<svg style="left:770px;top:265px" width="22" height="7"><path d="M4 0 L0.5 3.5 L4 7z" fill="#b0b0b0"/><path d="M17 0 L20.5 3.5 L17 7z" fill="#b0b0b0"/></svg>
<div class="ab" style="left:0;top:276px;width:800px;height:254px;background:#f0f0f0"></div>
<div class="t" style="left:2.5px;top:278.5px;font-size:9px;font-weight:bold;color:#111">×</div>
<div class="ab" style="left:1px;top:290px;width:10px;height:258px;background:linear-gradient(90deg,#a9c2e0,#bcd0ea)"></div>
<div class="t" style="left:2.2px;top:546.5px;font-size:8.5px;color:#142238;transform:rotate(-90deg);transform-origin:0 0">Инструменты</div>
<div class="ab" style="left:12px;top:279px;width:788px;height:251px;background:#fff;border-left:1px solid #c8c8c8;border-top:1px solid #d0d0d0"></div>
<div class="ab" style="left:13px;top:280px;width:771px;height:17.5px;background:linear-gradient(180deg,#ffffff,#f3f4f5);border-bottom:1px solid #dcdcdc"></div>
<div class="ab" style="left:105.75px;top:280px;width:1px;height:17.5px;background:#e2e2e2"></div>
<div class="ab" style="left:149.5px;top:280px;width:1px;height:17.5px;background:#e2e2e2"></div>
<div class="ab" style="left:188.25px;top:280px;width:1px;height:17.5px;background:#e2e2e2"></div>
<div class="ab" style="left:250.25px;top:280px;width:1px;height:17.5px;background:#e2e2e2"></div>
<div class="ab" style="left:300.25px;top:280px;width:1px;height:17.5px;background:#e2e2e2"></div>
<div class="ab" style="left:363.25px;top:280px;width:1px;height:17.5px;background:#e2e2e2"></div>
<div class="ab" style="left:425.0px;top:280px;width:1px;height:17.5px;background:#e2e2e2"></div>
<div class="ab" style="left:487.0px;top:280px;width:1px;height:17.5px;background:#e2e2e2"></div>
<div class="ab" style="left:582.0px;top:280px;width:1px;height:17.5px;background:#e2e2e2"></div>
<div class="ab" style="left:644.5px;top:280px;width:1px;height:17.5px;background:#e2e2e2"></div>
<div class="ab" style="left:707.0px;top:280px;width:1px;height:17.5px;background:#e2e2e2"></div>
<div class="ab" style="left:783.5px;top:280px;width:1px;height:17.5px;background:#e2e2e2"></div>
<div class="t" style="left:17.5px;top:285px;font-size:9.2px;color:#222;transform:scaleX(0.98);transform-origin:0 0">Время</div>
<svg style="left:55px;top:285px" width="8" height="5"><path d="M0 4.5 L4 0.5 L8 4.5z" fill="#333"/></svg>
<div class="t" style="right:655px;top:285px;font-size:9.2px;color:#222;transform:scaleX(1.02);transform-origin:100% 0">Тикет</div>
<div class="t" style="right:616.25px;top:285px;font-size:9.2px;color:#222;transform:scaleX(1.02);transform-origin:100% 0">Тип</div>
<div class="t" style="right:554.25px;top:285px;font-size:9.2px;color:#222;transform:scaleX(1.02);transform-origin:100% 0">Объем</div>
<div class="t" style="right:504.25px;top:285px;font-size:9.2px;color:#222;transform:scaleX(1.02);transform-origin:100% 0">Символ</div>
<div class="t" style="right:441.25px;top:285px;font-size:9.2px;color:#222;transform:scaleX(1.02);transform-origin:100% 0">Цена</div>
<div class="t" style="right:379.5px;top:285px;font-size:9.2px;color:#222;transform:scaleX(1.02);transform-origin:100% 0">S / L</div>
<div class="t" style="right:317.5px;top:285px;font-size:9.2px;color:#222;transform:scaleX(1.02);transform-origin:100% 0">T / P</div>
<div class="t" style="right:222.5px;top:285px;font-size:9.2px;color:#222;transform:scaleX(1.02);transform-origin:100% 0">Время</div>
<div class="t" style="right:160px;top:285px;font-size:9.2px;color:#222;transform:scaleX(1.02);transform-origin:100% 0">Цена</div>
<div class="t" style="right:97.5px;top:285px;font-size:9.2px;color:#222;transform:scaleX(1.02);transform-origin:100% 0">Своп</div>
<div class="t" style="right:21px;top:285px;font-size:9.2px;color:#222;transform:scaleX(1.02);transform-origin:100% 0">Прибыль</div>
<div class="ab" style="left:13px;top:297.5px;width:771px;height:15.625px;background:#e9e9e9;border-bottom:1px solid #d9d9d9"></div>
<div class="ab" style="left:363.75px;top:297.5px;width:61.25px;height:15.125px;background:#f7a3a3"></div>
<div class="ab" style="left:105.75px;top:297.5px;width:1px;height:15.625px;background:#d4d4d4"></div>
<div class="ab" style="left:149.5px;top:297.5px;width:1px;height:15.625px;background:#d4d4d4"></div>
<div class="ab" style="left:188.25px;top:297.5px;width:1px;height:15.625px;background:#d4d4d4"></div>
<div class="ab" style="left:250.25px;top:297.5px;width:1px;height:15.625px;background:#d4d4d4"></div>
<div class="ab" style="left:300.25px;top:297.5px;width:1px;height:15.625px;background:#d4d4d4"></div>
<div class="ab" style="left:363.25px;top:297.5px;width:1px;height:15.625px;background:#d4d4d4"></div>
<div class="ab" style="left:425.0px;top:297.5px;width:1px;height:15.625px;background:#d4d4d4"></div>
<div class="ab" style="left:487.0px;top:297.5px;width:1px;height:15.625px;background:#d4d4d4"></div>
<div class="ab" style="left:582.0px;top:297.5px;width:1px;height:15.625px;background:#d4d4d4"></div>
<div class="ab" style="left:644.5px;top:297.5px;width:1px;height:15.625px;background:#d4d4d4"></div>
<div class="ab" style="left:707.0px;top:297.5px;width:1px;height:15.625px;background:#d4d4d4"></div>
<svg style="left:13.8px;top:299.1px" width="10" height="13" viewBox="0 0 10 13"><path d="M1.8 0.6 H8.2 Q9.4 0.6 9.4 1.8 V9 L6 12.4 H1.8 Q0.6 12.4 0.6 11.2 V1.8 Q0.6 0.6 1.8 0.6Z" fill="#fcd9c6" stroke="#c8704e" stroke-width="1.1"/><path d="M2.6 3.4h4.8M2.6 5.6h4.8" stroke="#9a5a40" stroke-width="0.9"/><path d="M6 12.4 V9 H9.4Z" fill="#d0481c"/></svg>
<div class="t" style="left:29px;top:302.2px;font-size:9.2px;color:#1a1a1a;transform:scaleX(0.91);transform-origin:0 0">2020.07.13 17:20:...</div>
<div class="t" style="right:653.5px;top:302.2px;font-size:9.2px;color:#1a1a1a;transform:scaleX(0.91);transform-origin:100% 0">69008824</div>
<div class="t" style="right:614.75px;top:302.2px;font-size:9.2px;color:#1a1a1a;transform:scaleX(0.99);transform-origin:100% 0">sell</div>
<div class="t" style="right:552.75px;top:302.2px;font-size:9.2px;color:#1a1a1a;transform:scaleX(0.91);transform-origin:100% 0">1.00</div>
<div class="t" style="right:502.75px;top:302.2px;font-size:9.2px;color:#1a1a1a;transform:scaleX(0.93);transform-origin:100% 0">mesu20</div>
<div class="t" style="right:439.75px;top:302.2px;font-size:9.2px;color:#1a1a1a;transform:scaleX(0.91);transform-origin:100% 0">3221.75</div>
<div class="t" style="right:378.0px;top:302.2px;font-size:9.2px;color:#1a1a1a;transform:scaleX(0.91);transform-origin:100% 0">3224.75</div>
<div class="t" style="right:221.0px;top:302.2px;font-size:9.2px;color:#1a1a1a;transform:scaleX(0.91);transform-origin:100% 0">2020.07.13 17:36:34</div>
<div class="t" style="right:158.5px;top:302.2px;font-size:9.2px;color:#1a1a1a;transform:scaleX(0.91);transform-origin:100% 0">3224.75</div>
<div class="t" style="right:96.0px;top:302.2px;font-size:9.2px;color:#1a1a1a;transform:scaleX(0.91);transform-origin:100% 0">0.00</div>
<div class="t" style="right:19.5px;top:302.2px;font-size:9.2px;color:#1a1a1a;transform:scaleX(0.91);transform-origin:100% 0">-15.00</div>
<div class="ab" style="left:13px;top:313.125px;width:771px;height:15.625px;background:#e8f2fb;border-bottom:1px solid #d9d9d9"></div>
<div class="ab" style="left:105.75px;top:313.125px;width:1px;height:15.625px;background:#d4d4d4"></div>
<div class="ab" style="left:149.5px;top:313.125px;width:1px;height:15.625px;background:#d4d4d4"></div>
<div class="ab" style="left:188.25px;top:313.125px;width:1px;height:15.625px;background:#d4d4d4"></div>
<div class="ab" style="left:250.25px;top:313.125px;width:1px;height:15.625px;background:#d4d4d4"></div>
<div class="ab" style="left:300.25px;top:313.125px;width:1px;height:15.625px;background:#d4d4d4"></div>
<div class="ab" style="left:363.25px;top:313.125px;width:1px;height:15.625px;background:#d4d4d4"></div>
<div class="ab" style="left:425.0px;top:313.125px;width:1px;height:15.625px;background:#d4d4d4"></div>
<div class="ab" style="left:487.0px;top:313.125px;width:1px;height:15.625px;background:#d4d4d4"></div>
<div class="ab" style="left:582.0px;top:313.125px;width:1px;height:15.625px;background:#d4d4d4"></div>
<div class="ab" style="left:644.5px;top:313.125px;width:1px;height:15.625px;background:#d4d4d4"></div>
<div class="ab" style="left:707.0px;top:313.125px;width:1px;height:15.625px;background:#d4d4d4"></div>
<svg style="left:13.8px;top:314.725px" width="10" height="13" viewBox="0 0 10 13"><path d="M1.8 0.6 H8.2 Q9.4 0.6 9.4 1.8 V9 L6 12.4 H1.8 Q0.6 12.4 0.6 11.2 V1.8 Q0.6 0.6 1.8 0.6Z" fill="#fcd9c6" stroke="#c8704e" stroke-width="1.1"/><path d="M2.6 3.4h4.8M2.6 5.6h4.8" stroke="#9a5a40" stroke-width="0.9"/><path d="M6 12.4 V9 H9.4Z" fill="#d0481c"/></svg>
<div class="t" style="left:29px;top:317.825px;font-size:9.2px;color:#1a1a1a;transform:scaleX(0.91);transform-origin:0 0">2020.07.13 17:37:...</div>
<div class="t" style="right:653.5px;top:317.825px;font-size:9.2px;color:#1a1a1a;transform:scaleX(0.91);transform-origin:100% 0">69013316</div>
<div class="t" style="right:614.75px;top:317.825px;font-size:9.2px;color:#1a1a1a;transform:scaleX(0.99);transform-origin:100% 0">sell</div>
<div class="t" style="right:552.75px;top:317.825px;font-size:9.2px;color:#1a1a1a;transform:scaleX(0.91);transform-origin:100% 0">1.00</div>
<div class="t" style="right:502.75px;top:317.825px;font-size:9.2px;color:#1a1a1a;transform:scaleX(0.93);transform-origin:100% 0">mesu20</div>
<div class="t" style="right:439.75px;top:317.825px;font-size:9.2px;color:#1a1a1a;transform:scaleX(0.91);transform-origin:100% 0">3225.25</div>
<div class="t" style="right:378.0px;top:317.825px;font-size:9.2px;color:#1a1a1a;transform:scaleX(0.91);transform-origin:100% 0">3228.25</div>
<div class="t" style="right:221.0px;top:317.825px;font-size:9.2px;color:#1a1a1a;transform:scaleX(0.91);transform-origin:100% 0">2020.07.13 17:39:12</div>
<div class="t" style="right:158.5px;top:317.825px;font-size:9.2px;color:#1a1a1a;transform:scaleX(0.91);transform-origin:100% 0">3223.25</div>
<div class="t" style="right:96.0px;top:317.825px;font-size:9.2px;color:#1a1a1a;transform:scaleX(0.91);transform-origin:100% 0">0.00</div>
<div class="t" style="right:19.5px;top:317.825px;font-size:9.2px;color:#1a1a1a;transform:scaleX(0.91);transform-origin:100% 0">10.00</div>
<div class="ab" style="left:13px;top:328.75px;width:771px;height:15.625px;background:#e9e9e9;border-bottom:1px solid #d9d9d9"></div>
<div class="ab" style="left:105.75px;top:328.75px;width:1px;height:15.625px;background:#d4d4d4"></div>
<div class="ab" style="left:149.5px;top:328.75px;width:1px;height:15.625px;background:#d4d4d4"></div>
<div class="ab" style="left:188.25px;top:328.75px;width:1px;height:15.625px;background:#d4d4d4"></div>
<div class="ab" style="left:250.25px;top:328.75px;width:1px;height:15.625px;background:#d4d4d4"></div>
<div class="ab" style="left:300.25px;top:328.75px;width:1px;height:15.625px;background:#d4d4d4"></div>
<div class="ab" style="left:363.25px;top:328.75px;width:1px;height:15.625px;background:#d4d4d4"></div>
<div class="ab" style="left:425.0px;top:328.75px;width:1px;height:15.625px;background:#d4d4d4"></div>
<div class="ab" style="left:487.0px;top:328.75px;width:1px;height:15.625px;background:#d4d4d4"></div>
<div class="ab" style="left:582.0px;top:328.75px;width:1px;height:15.625px;background:#d4d4d4"></div>
<div class="ab" style="left:644.5px;top:328.75px;width:1px;height:15.625px;background:#d4d4d4"></div>
<div class="ab" style="left:707.0px;top:328.75px;width:1px;height:15.625px;background:#d4d4d4"></div>
<svg style="left:13.8px;top:330.35px" width="10" height="13" viewBox="0 0 10 13"><path d="M1.8 0.6 H8.2 Q9.4 0.6 9.4 1.8 V9 L6 12.4 H1.8 Q0.6 12.4 0.6 11.2 V1.8 Q0.6 0.6 1.8 0.6Z" fill="#fcd9c6" stroke="#c8704e" stroke-width="1.1"/><path d="M2.6 3.4h4.8M2.6 5.6h4.8" stroke="#9a5a40" stroke-width="0.9"/><path d="M6 12.4 V9 H9.4Z" fill="#d0481c"/></svg>
<div class="t" style="left:29px;top:333.45px;font-size:9.2px;color:#1a1a1a;transform:scaleX(0.91);transform-origin:0 0">2020.07.13 17:42:...</div>
<div class="t" style="right:653.5px;top:333.45px;font-size:9.2px;color:#1a1a1a;transform:scaleX(0.91);transform-origin:100% 0">69014996</div>
<div class="t" style="right:614.75px;top:333.45px;font-size:9.2px;color:#1a1a1a;transform:scaleX(0.99);transform-origin:100% 0">sell</div>
<div class="t" style="right:552.75px;top:333.45px;font-size:9.2px;color:#1a1a1a;transform:scaleX(0.91);transform-origin:100% 0">1.00</div>
<div class="t" style="right:502.75px;top:333.45px;font-size:9.2px;color:#1a1a1a;transform:scaleX(0.93);transform-origin:100% 0">mesu20</div>
<div class="t" style="right:439.75px;top:333.45px;font-size:9.2px;color:#1a1a1a;transform:scaleX(0.91);transform-origin:100% 0">3221.75</div>
<div class="t" style="right:378.0px;top:333.45px;font-size:9.2px;color:#1a1a1a;transform:scaleX(0.91);transform-origin:100% 0">3224.75</div>
<div class="t" style="right:221.0px;top:333.45px;font-size:9.2px;color:#1a1a1a;transform:scaleX(0.91);transform-origin:100% 0">2020.07.13 17:47:41</div>
<div class="t" style="right:158.5px;top:333.45px;font-size:9.2px;color:#1a1a1a;transform:scaleX(0.91);transform-origin:100% 0">3220.75</div>
<div class="t" style="right:96.0px;top:333.45px;font-size:9.2px;color:#1a1a1a;transform:scaleX(0.91);transform-origin:100% 0">0.00</div>
<div class="t" style="right:19.5px;top:333.45px;font-size:9.2px;color:#1a1a1a;transform:scaleX(0.91);transform-origin:100% 0">5.00</div>
<div class="ab" style="left:13px;top:344.375px;width:771px;height:15.625px;background:#ffffff;border-bottom:1px solid #d9d9d9"></div>
<div class="ab" style="left:363.75px;top:344.375px;width:61.25px;height:15.125px;background:#f7a3a3"></div>
<div class="ab" style="left:105.75px;top:344.375px;width:1px;height:15.625px;background:#d4d4d4"></div>
<div class="ab" style="left:149.5px;top:344.375px;width:1px;height:15.625px;background:#d4d4d4"></div>
<div class="ab" style="left:188.25px;top:344.375px;width:1px;height:15.625px;background:#d4d4d4"></div>
<div class="ab" style="left:250.25px;top:344.375px;width:1px;height:15.625px;background:#d4d4d4"></div>
<div class="ab" style="left:300.25px;top:344.375px;width:1px;height:15.625px;background:#d4d4d4"></div>
<div class="ab" style="left:363.25px;top:344.375px;width:1px;height:15.625px;background:#d4d4d4"></div>
<div class="ab" style="left:425.0px;top:344.375px;width:1px;height:15.625px;background:#d4d4d4"></div>
<div class="ab" style="left:487.0px;top:344.375px;width:1px;height:15.625px;background:#d4d4d4"></div>
<div class="ab" style="left:582.0px;top:344.375px;width:1px;height:15.625px;background:#d4d4d4"></div>
<div class="ab" style="left:644.5px;top:344.375px;width:1px;height:15.625px;background:#d4d4d4"></div>
<div class="ab" style="left:707.0px;top:344.375px;width:1px;height:15.625px;background:#d4d4d4"></div>
<svg style="left:13.8px;top:345.975px" width="10" height="13" viewBox="0 0 10 13"><path d="M1.8 0.6 H8.2 Q9.4 0.6 9.4 1.8 V9 L6 12.4 H1.8 Q0.6 12.4 0.6 11.2 V1.8 Q0.6 0.6 1.8 0.6Z" fill="#cbe6f8" stroke="#4f8db5" stroke-width="1.1"/><path d="M2.6 3.4h4.8M2.6 5.6h4.8" stroke="#3f6f90" stroke-width="0.9"/><path d="M6 12.4 V9 H9.4Z" fill="#2a72a8"/></svg>
<div class="t" style="left:29px;top:349.075px;font-size:9.2px;color:#1a1a1a;transform:scaleX(0.91);transform-origin:0 0">2020.07.13 18:05:...</div>
<div class="t" style="right:653.5px;top:349.075px;font-size:9.2px;color:#1a1a1a;transform:scaleX(0.91);transform-origin:100% 0">69021705</div>
<div class="t" style="right:614.75px;top:349.075px;font-size:9.2px;color:#1a1a1a;transform:scaleX(0.99);transform-origin:100% 0">buy</div>
<div class="t" style="right:552.75px;top:349.075px;font-size:9.2px;color:#1a1a1a;transform:scaleX(0.91);transform-origin:100% 0">1.00</div>
<div class="t" style="right:502.75px;top:349.075px;font-size:9.2px;color:#1a1a1a;transform:scaleX(0.93);transform-origin:100% 0">mesu20</div>
<div class="t" style="right:439.75px;top:349.075px;font-size:9.2px;color:#1a1a1a;transform:scaleX(0.91);transform-origin:100% 0">3214.50</div>
<div class="t" style="right:378.0px;top:349.075px;font-size:9.2px;color:#1a1a1a;transform:scaleX(0.91);transform-origin:100% 0">3214.00</div>
<div class="t" style="right:221.0px;top:349.075px;font-size:9.2px;color:#1a1a1a;transform:scaleX(0.91);transform-origin:100% 0">2020.07.13 18:05:58</div>
<div class="t" style="right:158.5px;top:349.075px;font-size:9.2px;color:#1a1a1a;transform:scaleX(0.91);transform-origin:100% 0">3214.00</div>
<div class="t" style="right:96.0px;top:349.075px;font-size:9.2px;color:#1a1a1a;transform:scaleX(0.91);transform-origin:100% 0">0.00</div>
<div class="t" style="right:19.5px;top:349.075px;font-size:9.2px;color:#1a1a1a;transform:scaleX(0.91);transform-origin:100% 0">-2.50</div>
<div class="ab" style="left:13px;top:360.0px;width:771px;height:15.625px;background:#e9e9e9;border-bottom:1px solid #d9d9d9"></div>
<div class="ab" style="left:363.75px;top:360.0px;width:61.25px;height:15.125px;background:#f7a3a3"></div>
<div class="ab" style="left:105.75px;top:360.0px;width:1px;height:15.625px;background:#d4d4d4"></div>
<div class="ab" style="left:149.5px;top:360.0px;width:1px;height:15.625px;background:#d4d4d4"></div>
<div class="ab" style="left:188.25px;top:360.0px;width:1px;height:15.625px;background:#d4d4d4"></div>
<div class="ab" style="left:250.25px;top:360.0px;width:1px;height:15.625px;background:#d4d4d4"></div>
<div class="ab" style="left:300.25px;top:360.0px;width:1px;height:15.625px;background:#d4d4d4"></div>
<div class="ab" style="left:363.25px;top:360.0px;width:1px;height:15.625px;background:#d4d4d4"></div>
<div class="ab" style="left:425.0px;top:360.0px;width:1px;height:15.625px;background:#d4d4d4"></div>
<div class="ab" style="left:487.0px;top:360.0px;width:1px;height:15.625px;background:#d4d4d4"></div>
<div class="ab" style="left:582.0px;top:360.0px;width:1px;height:15.625px;background:#d4d4d4"></div>
<div class="ab" style="left:644.5px;top:360.0px;width:1px;height:15.625px;background:#d4d4d4"></div>
<div class="ab" style="left:707.0px;top:360.0px;width:1px;height:15.625px;background:#d4d4d4"></div>
<svg style="left:13.8px;top:361.6px" width="10" height="13" viewBox="0 0 10 13"><path d="M1.8 0.6 H8.2 Q9.4 0.6 9.4 1.8 V9 L6 12.4 H1.8 Q0.6 12.4 0.6 11.2 V1.8 Q0.6 0.6 1.8 0.6Z" fill="#cbe6f8" stroke="#4f8db5" stroke-width="1.1"/><path d="M2.6 3.4h4.8M2.6 5.6h4.8" stroke="#3f6f90" stroke-width="0.9"/><path d="M6 12.4 V9 H9.4Z" fill="#2a72a8"/></svg>
<div class="t" style="left:29px;top:364.7px;font-size:9.2px;color:#1a1a1a;transform:scaleX(0.91);transform-origin:0 0">2020.07.13 18:06:...</div>
<div class="t" style="right:653.5px;top:364.7px;font-size:9.2px;color:#1a1a1a;transform:scaleX(0.91);transform-origin:100% 0">69022043</div>
<div class="t" style="right:614.75px;top:364.7px;font-size:9.2px;color:#1a1a1a;transform:scaleX(0.99);transform-origin:100% 0">buy</div>
<div class="t" style="right:552.75px;top:364.7px;font-size:9.2px;color:#1a1a1a;transform:scaleX(0.91);transform-origin:100% 0">1.00</div>
<div class="t" style="right:502.75px;top:364.7px;font-size:9.2px;color:#1a1a1a;transform:scaleX(0.93);transform-origin:100% 0">mesu20</div>
<div class="t" style="right:439.75px;top:364.7px;font-size:9.2px;color:#1a1a1a;transform:scaleX(0.91);transform-origin:100% 0">3212.75</div>
<div class="t" style="right:378.0px;top:364.7px;font-size:9.2px;color:#1a1a1a;transform:scaleX(0.91);transform-origin:100% 0">3211.75</div>
<div class="t" style="right:221.0px;top:364.7px;font-size:9.2px;color:#1a1a1a;transform:scaleX(0.91);transform-origin:100% 0">2020.07.13 18:07:04</div>
<div class="t" style="right:158.5px;top:364.7px;font-size:9.2px;color:#1a1a1a;transform:scaleX(0.91);transform-origin:100% 0">3211.75</div>
<div class="t" style="right:96.0px;top:364.7px;font-size:9.2px;color:#1a1a1a;transform:scaleX(0.91);transform-origin:100% 0">0.00</div>
<div class="t" style="right:19.5px;top:364.7px;font-size:9.2px;color:#1a1a1a;transform:scaleX(0.91);transform-origin:100% 0">-5.00</div>
<div class="ab" style="left:13px;top:375.625px;width:771px;height:15.625px;background:#ffffff;border-bottom:1px solid #d9d9d9"></div>
<div class="ab" style="left:363.75px;top:375.625px;width:61.25px;height:15.125px;background:#f7a3a3"></div>
<div class="ab" style="left:105.75px;top:375.625px;width:1px;height:15.625px;background:#d4d4d4"></div>
<div class="ab" style="left:149.5px;top:375.625px;width:1px;height:15.625px;background:#d4d4d4"></div>
<div class="ab" style="left:188.25px;top:375.625px;width:1px;height:15.625px;background:#d4d4d4"></div>
<div class="ab" style="left:250.25px;top:375.625px;width:1px;height:15.625px;background:#d4d4d4"></div>
<div class="ab" style="left:300.25px;top:375.625px;width:1px;height:15.625px;background:#d4d4d4"></div>
<div class="ab" style="left:363.25px;top:375.625px;width:1px;height:15.625px;background:#d4d4d4"></div>
<div class="ab" style="left:425.0px;top:375.625px;width:1px;height:15.625px;background:#d4d4d4"></div>
<div class="ab" style="left:487.0px;top:375.625px;width:1px;height:15.625px;background:#d4d4d4"></div>
<div class="ab" style="left:582.0px;top:375.625px;width:1px;height:15.625px;background:#d4d4d4"></div>
<div class="ab" style="left:644.5px;top:375.625px;width:1px;height:15.625px;background:#d4d4d4"></div>
<div class="ab" style="left:707.0px;top:375.625px;width:1px;height:15.625px;background:#d4d4d4"></div>
<svg style="left:13.8px;top:377.225px" width="10" height="13" viewBox="0 0 10 13"><path d="M1.8 0.6 H8.2 Q9.4 0.6 9.4 1.8 V9 L6 12.4 H1.8 Q0.6 12.4 0.6 11.2 V1.8 Q0.6 0.6 1.8 0.6Z" fill="#cbe6f8" stroke="#4f8db5" stroke-width="1.1"/><path d="M2.6 3.4h4.8M2.6 5.6h4.8" stroke="#3f6f90" stroke-width="0.9"/><path d="M6 12.4 V9 H9.4Z" fill="#2a72a8"/></svg>
<div class="t" style="left:29px;top:380.325px;font-size:9.2px;color:#1a1a1a;transform:scaleX(0.91);transform-origin:0 0">2020.07.13 18:08:...</div>
<div class="t" style="right:653.5px;top:380.325px;font-size:9.2px;color:#1a1a1a;transform:scaleX(0.91);transform-origin:100% 0">69022621</div>
<div class="t" style="right:614.75px;top:380.325px;font-size:9.2px;color:#1a1a1a;transform:scaleX(0.99);transform-origin:100% 0">buy</div>
<div class="t" style="right:552.75px;top:380.325px;font-size:9.2px;color:#1a1a1a;transform:scaleX(0.91);transform-origin:100% 0">1.00</div>
<div class="t" style="right:502.75px;top:380.325px;font-size:9.2px;color:#1a1a1a;transform:scaleX(0.93);transform-origin:100% 0">mesu20</div>
<div class="t" style="right:439.75px;top:380.325px;font-size:9.2px;color:#1a1a1a;transform:scaleX(0.91);transform-origin:100% 0">3210.00</div>
<div class="t" style="right:378.0px;top:380.325px;font-size:9.2px;color:#1a1a1a;transform:scaleX(0.91);transform-origin:100% 0">3208.75</div>
<div class="t" style="right:221.0px;top:380.325px;font-size:9.2px;color:#1a1a1a;transform:scaleX(0.91);transform-origin:100% 0">2020.07.13 18:08:30</div>
<div class="t" style="right:158.5px;top:380.325px;font-size:9.2px;color:#1a1a1a;transform:scaleX(0.91);transform-origin:100% 0">3208.75</div>
<div class="t" style="right:96.0px;top:380.325px;font-size:9.2px;color:#1a1a1a;transform:scaleX(0.91);transform-origin:100% 0">0.00</div>
<div class="t" style="right:19.5px;top:380.325px;font-size:9.2px;color:#1a1a1a;transform:scaleX(0.91);transform-origin:100% 0">-6.25</div>
<div class="ab" style="left:13px;top:391.25px;width:771px;height:15.625px;background:#e9e9e9;border-bottom:1px solid #d9d9d9"></div>
<div class="ab" style="left:363.75px;top:391.25px;width:61.25px;height:15.125px;background:#f7a3a3"></div>
<div class="ab" style="left:105.75px;top:391.25px;width:1px;height:15.625px;background:#d4d4d4"></div>
<div class="ab" style="left:149.5px;top:391.25px;width:1px;height:15.625px;background:#d4d4d4"></div>
<div class="ab" style="left:188.25px;top:391.25px;width:1px;height:15.625px;background:#d4d4d4"></div>
<div class="ab" style="left:250.25px;top:391.25px;width:1px;height:15.625px;background:#d4d4d4"></div>
<div class="ab" style="left:300.25px;top:391.25px;width:1px;height:15.625px;background:#d4d4d4"></div>
<div class="ab" style="left:363.25px;top:391.25px;width:1px;height:15.625px;background:#d4d4d4"></div>
<div class="ab" style="left:425.0px;top:391.25px;width:1px;height:15.625px;background:#d4d4d4"></div>
<div class="ab" style="left:487.0px;top:391.25px;width:1px;height:15.625px;background:#d4d4d4"></div>
<div class="ab" style="left:582.0px;top:391.25px;width:1px;height:15.625px;background:#d4d4d4"></div>
<div class="ab" style="left:644.5px;top:391.25px;width:1px;height:15.625px;background:#d4d4d4"></div>
<div class="ab" style="left:707.0px;top:391.25px;width:1px;height:15.625px;background:#d4d4d4"></div>
<svg style="left:13.8px;top:392.85px" width="10" height="13" viewBox="0 0 10 13"><path d="M1.8 0.6 H8.2 Q9.4 0.6 9.4 1.8 V9 L6 12.4 H1.8 Q0.6 12.4 0.6 11.2 V1.8 Q0.6 0.6 1.8 0.6Z" fill="#cbe6f8" stroke="#4f8db5" stroke-width="1.1"/><path d="M2.6 3.4h4.8M2.6 5.6h4.8" stroke="#3f6f90" stroke-width="0.9"/><path d="M6 12.4 V9 H9.4Z" fill="#2a72a8"/></svg>
<div class="t" style="left:29px;top:395.95px;font-size:9.2px;color:#1a1a1a;transform:scaleX(0.91);transform-origin:0 0">2020.07.13 18:10:...</div>
<div class="t" style="right:653.5px;top:395.95px;font-size:9.2px;color:#1a1a1a;transform:scaleX(0.91);transform-origin:100% 0">69023678</div>
<div class="t" style="right:614.75px;top:395.95px;font-size:9.2px;color:#1a1a1a;transform:scaleX(0.99);transform-origin:100% 0">buy</div>
<div class="t" style="right:552.75px;top:395.95px;font-size:9.2px;color:#1a1a1a;transform:scaleX(0.91);transform-origin:100% 0">1.00</div>
<div class="t" style="right:502.75px;top:395.95px;font-size:9.2px;color:#1a1a1a;transform:scaleX(0.93);transform-origin:100% 0">mesu20</div>
<div class="t" style="right:439.75px;top:395.95px;font-size:9.2px;color:#1a1a1a;transform:scaleX(0.91);transform-origin:100% 0">3208.00</div>
<div class="t" style="right:378.0px;top:395.95px;font-size:9.2px;color:#1a1a1a;transform:scaleX(0.91);transform-origin:100% 0">3207.00</div>
<div class="t" style="right:221.0px;top:395.95px;font-size:9.2px;color:#1a1a1a;transform:scaleX(0.91);transform-origin:100% 0">2020.07.13 18:10:30</div>
<div class="t" style="right:158.5px;top:395.95px;font-size:9.2px;color:#1a1a1a;transform:scaleX(0.91);transform-origin:100% 0">3207.00</div>
<div class="t" style="right:96.0px;top:395.95px;font-size:9.2px;color:#1a1a1a;transform:scaleX(0.91);transform-origin:100% 0">0.00</div>
<div class="t" style="right:19.5px;top:395.95px;font-size:9.2px;color:#1a1a1a;transform:scaleX(0.91);transform-origin:100% 0">-5.00</div>
<div class="ab" style="left:13px;top:406.875px;width:771px;height:15.625px;background:#ffffff;border-bottom:1px solid #d9d9d9"></div>
<div class="ab" style="left:363.75px;top:406.875px;width:61.25px;height:15.125px;background:#f7a3a3"></div>
<div class="ab" style="left:105.75px;top:406.875px;width:1px;height:15.625px;background:#d4d4d4"></div>
<div class="ab" style="left:149.5px;top:406.875px;width:1px;height:15.625px;background:#d4d4d4"></div>
<div class="ab" style="left:188.25px;top:406.875px;width:1px;height:15.625px;background:#d4d4d4"></div>
<div class="ab" style="left:250.25px;top:406.875px;width:1px;height:15.625px;background:#d4d4d4"></div>
<div class="ab" style="left:300.25px;top:406.875px;width:1px;height:15.625px;background:#d4d4d4"></div>
<div class="ab" style="left:363.25px;top:406.875px;width:1px;height:15.625px;background:#d4d4d4"></div>
<div class="ab" style="left:425.0px;top:406.875px;width:1px;height:15.625px;background:#d4d4d4"></div>
<div class="ab" style="left:487.0px;top:406.875px;width:1px;height:15.625px;background:#d4d4d4"></div>
<div class="ab" style="left:582.0px;top:406.875px;width:1px;height:15.625px;background:#d4d4d4"></div>
<div class="ab" style="left:644.5px;top:406.875px;width:1px;height:15.625px;background:#d4d4d4"></div>
<div class="ab" style="left:707.0px;top:406.875px;width:1px;height:15.625px;background:#d4d4d4"></div>
<svg style="left:13.8px;top:408.475px" width="10" height="13" viewBox="0 0 10 13"><path d="M1.8 0.6 H8.2 Q9.4 0.6 9.4 1.8 V9 L6 12.4 H1.8 Q0.6 12.4 0.6 11.2 V1.8 Q0.6 0.6 1.8 0.6Z" fill="#fcd9c6" stroke="#c8704e" stroke-width="1.1"/><path d="M2.6 3.4h4.8M2.6 5.6h4.8" stroke="#9a5a40" stroke-width="0.9"/><path d="M6 12.4 V9 H9.4Z" fill="#d0481c"/></svg>
<div class="t" style="left:29px;top:411.575px;font-size:9.2px;color:#1a1a1a;transform:scaleX(0.91);transform-origin:0 0">2020.07.13 18:11:...</div>
<div class="t" style="right:653.5px;top:411.575px;font-size:9.2px;color:#1a1a1a;transform:scaleX(0.91);transform-origin:100% 0">69024386</div>
<div class="t" style="right:614.75px;top:411.575px;font-size:9.2px;color:#1a1a1a;transform:scaleX(0.99);transform-origin:100% 0">sell</div>
<div class="t" style="right:552.75px;top:411.575px;font-size:9.2px;color:#1a1a1a;transform:scaleX(0.91);transform-origin:100% 0">1.00</div>
<div class="t" style="right:502.75px;top:411.575px;font-size:9.2px;color:#1a1a1a;transform:scaleX(0.93);transform-origin:100% 0">mesu20</div>
<div class="t" style="right:439.75px;top:411.575px;font-size:9.2px;color:#1a1a1a;transform:scaleX(0.91);transform-origin:100% 0">3203.00</div>
<div class="t" style="right:378.0px;top:411.575px;font-size:9.2px;color:#1a1a1a;transform:scaleX(0.91);transform-origin:100% 0">3204.25</div>
<div class="t" style="right:221.0px;top:411.575px;font-size:9.2px;color:#1a1a1a;transform:scaleX(0.91);transform-origin:100% 0">2020.07.13 18:13:32</div>
<div class="t" style="right:158.5px;top:411.575px;font-size:9.2px;color:#1a1a1a;transform:scaleX(0.91);transform-origin:100% 0">3204.25</div>
<div class="t" style="right:96.0px;top:411.575px;font-size:9.2px;color:#1a1a1a;transform:scaleX(0.91);transform-origin:100% 0">0.00</div>
<div class="t" style="right:19.5px;top:411.575px;font-size:9.2px;color:#1a1a1a;transform:scaleX(0.91);transform-origin:100% 0">-6.25</div>
<div class="ab" style="left:13px;top:422.5px;width:771px;height:15.625px;background:#e9e9e9;border-bottom:1px solid #d9d9d9"></div>
<div class="ab" style="left:363.75px;top:422.5px;width:61.25px;height:15.125px;background:#f7a3a3"></div>
<div class="ab" style="left:105.75px;top:422.5px;width:1px;height:15.625px;background:#d4d4d4"></div>
<div class="ab" style="left:149.5px;top:422.5px;width:1px;height:15.625px;background:#d4d4d4"></div>
<div class="ab" style="left:188.25px;top:422.5px;width:1px;height:15.625px;background:#d4d4d4"></div>
<div class="ab" style="left:250.25px;top:422.5px;width:1px;height:15.625px;background:#d4d4d4"></div>
<div class="ab" style="left:300.25px;top:422.5px;width:1px;height:15.625px;background:#d4d4d4"></div>
<div class="ab" style="left:363.25px;top:422.5px;width:1px;height:15.625px;background:#d4d4d4"></div>
<div class="ab" style="left:425.0px;top:422.5px;width:1px;height:15.625px;background:#d4d4d4"></div>
<div class="ab" style="left:487.0px;top:422.5px;width:1px;height:15.625px;background:#d4d4d4"></div>
<div class="ab" style="left:582.0px;top:422.5px;width:1px;height:15.625px;background:#d4d4d4"></div>
<div class="ab" style="left:644.5px;top:422.5px;width:1px;height:15.625px;background:#d4d4d4"></div>
<div class="ab" style="left:707.0px;top:422.5px;width:1px;height:15.625px;background:#d4d4d4"></div>
<svg style="left:13.8px;top:424.1px" width="10" height="13" viewBox="0 0 10 13"><path d="M1.8 0.6 H8.2 Q9.4 0.6 9.4 1.8 V9 L6 12.4 H1.8 Q0.6 12.4 0.6 11.2 V1.8 Q0.6 0.6 1.8 0.6Z" fill="#fcd9c6" stroke="#c8704e" stroke-width="1.1"/><path d="M2.6 3.4h4.8M2.6 5.6h4.8" stroke="#9a5a40" stroke-width="0.9"/><path d="M6 12.4 V9 H9.4Z" fill="#d0481c"/></svg>
<div class="t" style="left:29px;top:427.2px;font-size:9.2px;color:#1a1a1a;transform:scaleX(0.91);transform-origin:0 0">2020.07.13 18:14:...</div>
<div class="t" style="right:653.5px;top:427.2px;font-size:9.2px;color:#1a1a1a;transform:scaleX(0.91);transform-origin:100% 0">69025616</div>
<div class="t" style="right:614.75px;top:427.2px;font-size:9.2px;color:#1a1a1a;transform:scaleX(0.99);transform-origin:100% 0">sell</div>
<div class="t" style="right:552.75px;top:427.2px;font-size:9.2px;color:#1a1a1a;transform:scaleX(0.91);transform-origin:100% 0">1.00</div>
<div class="t" style="right:502.75px;top:427.2px;font-size:9.2px;color:#1a1a1a;transform:scaleX(0.93);transform-origin:100% 0">mesu20</div>
<div class="t" style="right:439.75px;top:427.2px;font-size:9.2px;color:#1a1a1a;transform:scaleX(0.91);transform-origin:100% 0">3206.00</div>
<div class="t" style="right:378.0px;top:427.2px;font-size:9.2px;color:#1a1a1a;transform:scaleX(0.91);transform-origin:100% 0">3207.25</div>
<div class="t" style="right:221.0px;top:427.2px;font-size:9.2px;color:#1a1a1a;transform:scaleX(0.91);transform-origin:100% 0">2020.07.13 18:15:19</div>
<div class="t" style="right:158.5px;top:427.2px;font-size:9.2px;color:#1a1a1a;transform:scaleX(0.91);transform-origin:100% 0">3207.25</div>
<div class="t" style="right:96.0px;top:427.2px;font-size:9.2px;color:#1a1a1a;transform:scaleX(0.91);transform-origin:100% 0">0.00</div>
<div class="t" style="right:19.5px;top:427.2px;font-size:9.2px;color:#1a1a1a;transform:scaleX(0.91);transform-origin:100% 0">-6.25</div>
<div class="ab" style="left:13px;top:438.125px;width:771px;height:15.625px;background:#ffffff;border-bottom:1px solid #d9d9d9"></div>
<div class="ab" style="left:105.75px;top:438.125px;width:1px;height:15.625px;background:#d4d4d4"></div>
<div class="ab" style="left:149.5px;top:438.125px;width:1px;height:15.625px;background:#d4d4d4"></div>
<div class="ab" style="left:188.25px;top:438.125px;width:1px;height:15.625px;background:#d4d4d4"></div>
<div class="ab" style="left:250.25px;top:438.125px;width:1px;height:15.625px;background:#d4d4d4"></div>
<div class="ab" style="left:300.25px;top:438.125px;width:1px;height:15.625px;background:#d4d4d4"></div>
<div class="ab" style="left:363.25px;top:438.125px;width:1px;height:15.625px;background:#d4d4d4"></div>
<div class="ab" style="left:425.0px;top:438.125px;width:1px;height:15.625px;background:#d4d4d4"></div>
<div class="ab" style="left:487.0px;top:438.125px;width:1px;height:15.625px;background:#d4d4d4"></div>
<div class="ab" style="left:582.0px;top:438.125px;width:1px;height:15.625px;background:#d4d4d4"></div>
<div class="ab" style="left:644.5px;top:438.125px;width:1px;height:15.625px;background:#d4d4d4"></div>
<div class="ab" style="left:707.0px;top:438.125px;width:1px;height:15.625px;background:#d4d4d4"></div>
<svg style="left:13.8px;top:439.725px" width="10" height="13" viewBox="0 0 10 13"><path d="M1.8 0.6 H8.2 Q9.4 0.6 9.4 1.8 V9 L6 12.4 H1.8 Q0.6 12.4 0.6 11.2 V1.8 Q0.6 0.6 1.8 0.6Z" fill="#cbe6f8" stroke="#4f8db5" stroke-width="1.1"/><path d="M2.6 3.4h4.8M2.6 5.6h4.8" stroke="#3f6f90" stroke-width="0.9"/><path d="M6 12.4 V9 H9.4Z" fill="#2a72a8"/></svg>
<div class="t" style="left:29px;top:442.825px;font-size:9.2px;color:#1a1a1a;transform:scaleX(0.91);transform-origin:0 0">2020.07.13 18:17:...</div>
<div class="t" style="right:653.5px;top:442.825px;font-size:9.2px;color:#1a1a1a;transform:scaleX(0.91);transform-origin:100% 0">69026857</div>
<div class="t" style="right:614.75px;top:442.825px;font-size:9.2px;color:#1a1a1a;transform:scaleX(0.99);transform-origin:100% 0">buy</div>
<div class="t" style="right:552.75px;top:442.825px;font-size:9.2px;color:#1a1a1a;transform:scaleX(0.91);transform-origin:100% 0">1.00</div>
<div class="t" style="right:502.75px;top:442.825px;font-size:9.2px;color:#1a1a1a;transform:scaleX(0.93);transform-origin:100% 0">mesu20</div>
<div class="t" style="right:439.75px;top:442.825px;font-size:9.2px;color:#1a1a1a;transform:scaleX(0.91);transform-origin:100% 0">3207.25</div>
<div class="t" style="right:378.0px;top:442.825px;font-size:9.2px;color:#1a1a1a;transform:scaleX(0.91);transform-origin:100% 0">3204.25</div>
<div class="t" style="right:221.0px;top:442.825px;font-size:9.2px;color:#1a1a1a;transform:scaleX(0.91);transform-origin:100% 0">2020.07.13 18:18:49</div>
<div class="t" style="right:158.5px;top:442.825px;font-size:9.2px;color:#1a1a1a;transform:scaleX(0.91);transform-origin:100% 0">3208.50</div>
<div class="t" style="right:96.0px;top:442.825px;font-size:9.2px;color:#1a1a1a;transform:scaleX(0.91);transform-origin:100% 0">0.00</div>
<div class="t" style="right:19.5px;top:442.825px;font-size:9.2px;color:#1a1a1a;transform:scaleX(0.91);transform-origin:100% 0">6.25</div>
<div class="ab" style="left:13px;top:453.75px;width:771px;height:15.625px;background:#e9e9e9;border-bottom:1px solid #d9d9d9"></div>
<div class="ab" style="left:105.75px;top:453.75px;width:1px;height:15.625px;background:#d4d4d4"></div>
<div class="ab" style="left:149.5px;top:453.75px;width:1px;height:15.625px;background:#d4d4d4"></div>
<div class="ab" style="left:188.25px;top:453.75px;width:1px;height:15.625px;background:#d4d4d4"></div>
<div class="ab" style="left:250.25px;top:453.75px;width:1px;height:15.625px;background:#d4d4d4"></div>
<div class="ab" style="left:300.25px;top:453.75px;width:1px;height:15.625px;background:#d4d4d4"></div>
<div class="ab" style="left:363.25px;top:453.75px;width:1px;height:15.625px;background:#d4d4d4"></div>
<div class="ab" style="left:425.0px;top:453.75px;width:1px;height:15.625px;background:#d4d4d4"></div>
<div class="ab" style="left:487.0px;top:453.75px;width:1px;height:15.625px;background:#d4d4d4"></div>
<div class="ab" style="left:582.0px;top:453.75px;width:1px;height:15.625px;background:#d4d4d4"></div>
<div class="ab" style="left:644.5px;top:453.75px;width:1px;height:15.625px;background:#d4d4d4"></div>
<div class="ab" style="left:707.0px;top:453.75px;width:1px;height:15.625px;background:#d4d4d4"></div>
<svg style="left:13.8px;top:455.35px" width="10" height="13" viewBox="0 0 10 13"><path d="M1.8 0.6 H8.2 Q9.4 0.6 9.4 1.8 V9 L6 12.4 H1.8 Q0.6 12.4 0.6 11.2 V1.8 Q0.6 0.6 1.8 0.6Z" fill="#cbe6f8" stroke="#4f8db5" stroke-width="1.1"/><path d="M2.6 3.4h4.8M2.6 5.6h4.8" stroke="#3f6f90" stroke-width="0.9"/><path d="M6 12.4 V9 H9.4Z" fill="#2a72a8"/></svg>
<div class="t" style="left:29px;top:458.45px;font-size:9.2px;color:#1a1a1a;transform:scaleX(0.91);transform-origin:0 0">2020.07.13 18:21:...</div>
<div class="t" style="right:653.5px;top:458.45px;font-size:9.2px;color:#1a1a1a;transform:scaleX(0.91);transform-origin:100% 0">69028453</div>
<div class="t" style="right:614.75px;top:458.45px;font-size:9.2px;color:#1a1a1a;transform:scaleX(0.99);transform-origin:100% 0">buy</div>
<div class="t" style="right:552.75px;top:458.45px;font-size:9.2px;color:#1a1a1a;transform:scaleX(0.91);transform-origin:100% 0">1.00</div>
<div class="t" style="right:502.75px;top:458.45px;font-size:9.2px;color:#1a1a1a;transform:scaleX(0.93);transform-origin:100% 0">mesu20</div>
<div class="t" style="right:439.75px;top:458.45px;font-size:9.2px;color:#1a1a1a;transform:scaleX(0.91);transform-origin:100% 0">3207.50</div>
<div class="t" style="right:378.0px;top:458.45px;font-size:9.2px;color:#1a1a1a;transform:scaleX(0.91);transform-origin:100% 0">3206.75</div>
<div class="t" style="right:221.0px;top:458.45px;font-size:9.2px;color:#1a1a1a;transform:scaleX(0.91);transform-origin:100% 0">2020.07.13 18:23:45</div>
<div class="t" style="right:158.5px;top:458.45px;font-size:9.2px;color:#1a1a1a;transform:scaleX(0.91);transform-origin:100% 0">3207.75</div>
<div class="t" style="right:96.0px;top:458.45px;font-size:9.2px;color:#1a1a1a;transform:scaleX(0.91);transform-origin:100% 0">0.00</div>
<div class="t" style="right:19.5px;top:458.45px;font-size:9.2px;color:#1a1a1a;transform:scaleX(0.91);transform-origin:100% 0">1.25</div>
<div class="ab" style="left:13px;top:469.375px;width:771px;height:15.625px;background:#ffffff;border-bottom:1px solid #d9d9d9"></div>
<div class="ab" style="left:363.75px;top:469.375px;width:61.25px;height:15.125px;background:#f7a3a3"></div>
<div class="ab" style="left:105.75px;top:469.375px;width:1px;height:15.625px;background:#d4d4d4"></div>
<div class="ab" style="left:149.5px;top:469.375px;width:1px;height:15.625px;background:#d4d4d4"></div>
<div class="ab" style="left:188.25px;top:469.375px;width:1px;height:15.625px;background:#d4d4d4"></div>
<div class="ab" style="left:250.25px;top:469.375px;width:1px;height:15.625px;background:#d4d4d4"></div>
<div class="ab" style="left:300.25px;top:469.375px;width:1px;height:15.625px;background:#d4d4d4"></div>
<div class="ab" style="left:363.25px;top:469.375px;width:1px;height:15.625px;background:#d4d4d4"></div>
<div class="ab" style="left:425.0px;top:469.375px;width:1px;height:15.625px;background:#d4d4d4"></div>
<div class="ab" style="left:487.0px;top:469.375px;width:1px;height:15.625px;background:#d4d4d4"></div>
<div class="ab" style="left:582.0px;top:469.375px;width:1px;height:15.625px;background:#d4d4d4"></div>
<div class="ab" style="left:644.5px;top:469.375px;width:1px;height:15.625px;background:#d4d4d4"></div>
<div class="ab" style="left:707.0px;top:469.375px;width:1px;height:15.625px;background:#d4d4d4"></div>
<svg style="left:13.8px;top:470.975px" width="10" height="13" viewBox="0 0 10 13"><path d="M1.8 0.6 H8.2 Q9.4 0.6 9.4 1.8 V9 L6 12.4 H1.8 Q0.6 12.4 0.6 11.2 V1.8 Q0.6 0.6 1.8 0.6Z" fill="#cbe6f8" stroke="#4f8db5" stroke-width="1.1"/><path d="M2.6 3.4h4.8M2.6 5.6h4.8" stroke="#3f6f90" stroke-width="0.9"/><path d="M6 12.4 V9 H9.4Z" fill="#2a72a8"/></svg>
<div class="t" style="left:29px;top:474.075px;font-size:9.2px;color:#1a1a1a;transform:scaleX(0.91);transform-origin:0 0">2020.07.13 18:24:...</div>
<div class="t" style="right:653.5px;top:474.075px;font-size:9.2px;color:#1a1a1a;transform:scaleX(0.91);transform-origin:100% 0">69029880</div>
<div class="t" style="right:614.75px;top:474.075px;font-size:9.2px;color:#1a1a1a;transform:scaleX(0.99);transform-origin:100% 0">buy</div>
<div class="t" style="right:552.75px;top:474.075px;font-size:9.2px;color:#1a1a1a;transform:scaleX(0.91);transform-origin:100% 0">1.00</div>
<div class="t" style="right:502.75px;top:474.075px;font-size:9.2px;color:#1a1a1a;transform:scaleX(0.93);transform-origin:100% 0">mesu20</div>
<div class="t" style="right:439.75px;top:474.075px;font-size:9.2px;color:#1a1a1a;transform:scaleX(0.91);transform-origin:100% 0">3203.50</div>
<div class="t" style="right:378.0px;top:474.075px;font-size:9.2px;color:#1a1a1a;transform:scaleX(0.91);transform-origin:100% 0">3202.00</div>
<div class="t" style="right:221.0px;top:474.075px;font-size:9.2px;color:#1a1a1a;transform:scaleX(0.91);transform-origin:100% 0">2020.07.13 18:24:48</div>
<div class="t" style="right:158.5px;top:474.075px;font-size:9.2px;color:#1a1a1a;transform:scaleX(0.91);transform-origin:100% 0">3201.75</div>
<div class="t" style="right:96.0px;top:474.075px;font-size:9.2px;color:#1a1a1a;transform:scaleX(0.91);transform-origin:100% 0">0.00</div>
<div class="t" style="right:19.5px;top:474.075px;font-size:9.2px;color:#1a1a1a;transform:scaleX(0.91);transform-origin:100% 0">-8.75</div>
<div class="ab" style="left:13px;top:485.0px;width:771px;height:15.625px;background:#e9e9e9;border-bottom:1px solid #d9d9d9"></div>
<div class="ab" style="left:363.75px;top:485.0px;width:61.25px;height:15.125px;background:#f7a3a3"></div>
<div class="ab" style="left:105.75px;top:485.0px;width:1px;height:15.625px;background:#d4d4d4"></div>
<div class="ab" style="left:149.5px;top:485.0px;width:1px;height:15.625px;background:#d4d4d4"></div>
<div class="ab" style="left:188.25px;top:485.0px;width:1px;height:15.625px;background:#d4d4d4"></div>
<div class="ab" style="left:250.25px;top:485.0px;width:1px;height:15.625px;background:#d4d4d4"></div>
<div class="ab" style="left:300.25px;top:485.0px;width:1px;height:15.625px;background:#d4d4d4"></div>
<div class="ab" style="left:363.25px;top:485.0px;width:1px;height:15.625px;background:#d4d4d4"></div>
<div class="ab" style="left:425.0px;top:485.0px;width:1px;height:15.625px;background:#d4d4d4"></div>
<div class="ab" style="left:487.0px;top:485.0px;width:1px;height:15.625px;background:#d4d4d4"></div>
<div class="ab" style="left:582.0px;top:485.0px;width:1px;height:15.625px;background:#d4d4d4"></div>
<div class="ab" style="left:644.5px;top:485.0px;width:1px;height:15.625px;background:#d4d4d4"></div>
<div class="ab" style="left:707.0px;top:485.0px;width:1px;height:15.625px;background:#d4d4d4"></div>
<svg style="left:13.8px;top:486.6px" width="10" height="13" viewBox="0 0 10 13"><path d="M1.8 0.6 H8.2 Q9.4 0.6 9.4 1.8 V9 L6 12.4 H1.8 Q0.6 12.4 0.6 11.2 V1.8 Q0.6 0.6 1.8 0.6Z" fill="#cbe6f8" stroke="#4f8db5" stroke-width="1.1"/><path d="M2.6 3.4h4.8M2.6 5.6h4.8" stroke="#3f6f90" stroke-width="0.9"/><path d="M6 12.4 V9 H9.4Z" fill="#2a72a8"/></svg>
<div class="t" style="left:29px;top:489.7px;font-size:9.2px;color:#1a1a1a;transform:scaleX(0.91);transform-origin:0 0">2020.07.13 18:26:...</div>
<div class="t" style="right:653.5px;top:489.7px;font-size:9.2px;color:#1a1a1a;transform:scaleX(0.91);transform-origin:100% 0">69030796</div>
<div class="t" style="right:614.75px;top:489.7px;font-size:9.2px;color:#1a1a1a;transform:scaleX(0.99);transform-origin:100% 0">buy</div>
<div class="t" style="right:552.75px;top:489.7px;font-size:9.2px;color:#1a1a1a;transform:scaleX(0.91);transform-origin:100% 0">1.00</div>
<div class="t" style="right:502.75px;top:489.7px;font-size:9.2px;color:#1a1a1a;transform:scaleX(0.93);transform-origin:100% 0">mesu20</div>
<div class="t" style="right:439.75px;top:489.7px;font-size:9.2px;color:#1a1a1a;transform:scaleX(0.91);transform-origin:100% 0">3200.00</div>
<div class="t" style="right:378.0px;top:489.7px;font-size:9.2px;color:#1a1a1a;transform:scaleX(0.91);transform-origin:100% 0">3199.50</div>
<div class="t" style="right:221.0px;top:489.7px;font-size:9.2px;color:#1a1a1a;transform:scaleX(0.91);transform-origin:100% 0">2020.07.13 18:26:42</div>
<div class="t" style="right:158.5px;top:489.7px;font-size:9.2px;color:#1a1a1a;transform:scaleX(0.91);transform-origin:100% 0">3199.50</div>
<div class="t" style="right:96.0px;top:489.7px;font-size:9.2px;color:#1a1a1a;transform:scaleX(0.91);transform-origin:100% 0">0.00</div>
<div class="t" style="right:19.5px;top:489.7px;font-size:9.2px;color:#1a1a1a;transform:scaleX(0.91);transform-origin:100% 0">-2.50</div>
<div class="ab" style="left:13px;top:500.625px;width:771px;height:16px;background:#d5d5d5"></div>
<svg style="left:14px;top:503.125px" width="11" height="11"><circle cx="5.5" cy="5.5" r="4.6" fill="none" stroke="#333" stroke-width="1.1"/><path d="M3 5.5h5" stroke="#333" stroke-width="1.2"/></svg>
<div class="t" style="left:29px;top:503.825px;font-size:9.7px;font-weight:bold;color:#1a1a1a;transform:scaleX(0.945);transform-origin:0 0">Прибыль: -44.62  Кредит: 0.00  Депозит: 10 000.00  Снятие: 0.00  Баланс: 9 955.38</div>
<div class="t" style="right:96.0px;top:503.825px;font-size:9.7px;font-weight:bold;color:#1a1a1a;transform:scaleX(0.93);transform-origin:100% 0">0.00</div>
<div class="t" style="right:19.5px;top:503.825px;font-size:9.7px;font-weight:bold;color:#1a1a1a;transform:scaleX(0.93);transform-origin:100% 0">-35.00</div>
<div class="ab" style="left:784px;top:280px;width:16px;height:250px;background:#f0f0f0"></div>
<div class="ab" style="left:784px;top:280px;width:13px;height:250px;background:#e9e9e9;border-left:1px solid #e2e2e2"></div>
<svg style="left:787.5px;top:284.5px" width="7" height="4"><path d="M0 3.8 L3.5 0.3 L7 3.8z" fill="#555"/></svg>
<div class="ab" style="left:785px;top:308.5px;width:11.5px;height:210px;background:linear-gradient(90deg,#f6f6f6,#e4e4e4);border:1px solid #b4b4b4;border-radius:2px"></div>
<div class="ab" style="left:788px;top:409.5px;width:6px;height:5px;border-top:1px solid #888;border-bottom:1px solid #888"></div><div class="ab" style="left:788px;top:411.5px;width:6px;height:1px;background:#888"></div>
<svg style="left:787.5px;top:522px" width="7" height="4"><path d="M0 0.2 L3.5 3.7 L7 0.2z" fill="#555"/></svg>
<div class="ab" style="left:12px;top:530px;width:788px;height:20px;background:#f0f0f0;border-top:1px solid #6e6e6e"></div>
<div class="ab" style="left:118px;top:530px;width:53px;height:15.5px;background:#fff;border:1px solid #222;border-top:none"></div>
<div class="t" style="left:22px;top:534.5px;font-size:9.2px;color:#747474;-webkit-text-stroke:0.05px #747474">Торговля</div>
<div class="t" style="left:78px;top:534.5px;font-size:9.2px;color:#747474;-webkit-text-stroke:0.05px #747474">Активы</div>
<div class="t" style="left:125px;top:534.5px;font-size:9.2px;color:#111;-webkit-text-stroke:0.2px #111">История</div>
<div class="t" style="left:178.5px;top:534.5px;font-size:9.2px;color:#747474;-webkit-text-stroke:0.05px #747474">Новости</div>
<div class="t" style="left:231px;top:534.5px;font-size:9.2px;color:#747474;-webkit-text-stroke:0.05px #747474">Почта</div>
<div class="t" style="left:278px;top:534.5px;font-size:9.2px;color:#747474;-webkit-text-stroke:0.05px #747474">Календарь</div>
<div class="t" style="left:339.5px;top:534.5px;font-size:9.2px;color:#747474;-webkit-text-stroke:0.05px #747474">Компания</div>
<div class="t" style="left:399px;top:534.5px;font-size:9.2px;color:#747474;-webkit-text-stroke:0.05px #747474">Маркет</div>
<div class="t" style="left:446.5px;top:534.5px;font-size:9.2px;color:#747474;-webkit-text-stroke:0.05px #747474">Алерты</div>
<div class="t" style="left:495px;top:534.5px;font-size:9.2px;color:#747474;-webkit-text-stroke:0.05px #747474">Сигналы</div>
<div class="t" style="left:549px;top:534.5px;font-size:9.2px;color:#747474;-webkit-text-stroke:0.05px #747474">Статьи</div>
<div class="t" style="left:599px;top:534.5px;font-size:9.2px;color:#747474;-webkit-text-stroke:0.05px #747474">Библиотека</div>
<div class="t" style="left:665px;top:534.5px;font-size:9.2px;color:#747474;-webkit-text-stroke:0.05px #747474">VPS</div>
<div class="t" style="left:696px;top:534.5px;font-size:9.2px;color:#747474;-webkit-text-stroke:0.05px #747474">Эксперты</div>
<div class="t" style="left:753px;top:534.5px;font-size:9.2px;color:#747474;-webkit-text-stroke:0.05px #747474">Журнал</div>
<div class="ab" style="left:70.5px;top:534px;width:1px;height:11px;background:#9a9a9a"></div>
<div class="ab" style="left:223px;top:534px;width:1px;height:11px;background:#9a9a9a"></div>
<div class="ab" style="left:270px;top:534px;width:1px;height:11px;background:#9a9a9a"></div>
<div class="ab" style="left:331.4px;top:534px;width:1px;height:11px;background:#9a9a9a"></div>
<div class="ab" style="left:391px;top:534px;width:1px;height:11px;background:#9a9a9a"></div>
<div class="ab" style="left:438.5px;top:534px;width:1px;height:11px;background:#9a9a9a"></div>
<div class="ab" style="left:487.4px;top:534px;width:1px;height:11px;background:#9a9a9a"></div>
<div class="ab" style="left:541px;top:534px;width:1px;height:11px;background:#9a9a9a"></div>
<div class="ab" style="left:591px;top:534px;width:1px;height:11px;background:#9a9a9a"></div>
<div class="ab" style="left:657.6px;top:534px;width:1px;height:11px;background:#9a9a9a"></div>
<div class="ab" style="left:688.6px;top:534px;width:1px;height:11px;background:#9a9a9a"></div>
<div class="ab" style="left:745px;top:534px;width:1px;height:11px;background:#9a9a9a"></div>
<div class="t" style="left:258px;top:539px;font-size:7px;font-weight:bold;color:#d02020">7</div>
<div class="t" style="left:578px;top:539px;font-size:7px;font-weight:bold;color:#d02020">1</div>
<div class="ab" style="left:0;top:550px;width:800px;height:19px;background:#f0f0f0;border-top:1px solid #d8d8d8"></div>
<div class="t" style="left:2px;top:555.5px;font-size:9.1px;color:#111">Для вызова справки нажмите F1</div>
<div class="ab" style="left:259px;top:552px;width:1px;height:16px;background:#d0d0d0"></div>
<div class="ab" style="left:358.7px;top:552px;width:1px;height:16px;background:#d0d0d0"></div>
<div class="ab" style="left:436px;top:552px;width:1px;height:16px;background:#d0d0d0"></div>
<div class="ab" style="left:491px;top:552px;width:1px;height:16px;background:#d0d0d0"></div>
<div class="ab" style="left:546px;top:552px;width:1px;height:16px;background:#d0d0d0"></div>
<div class="ab" style="left:600px;top:552px;width:1px;height:16px;background:#d0d0d0"></div>
<div class="ab" style="left:654.8px;top:552px;width:1px;height:16px;background:#d0d0d0"></div>
<div class="ab" style="left:705px;top:552px;width:1px;height:16px;background:#d0d0d0"></div>
<div class="t" style="left:263px;top:555.5px;font-size:9.1px;color:#111">Default</div>
<svg style="left:710px;top:555px" width="13" height="10"><g fill="#3cae3c"><rect x="0" y="7" width="2" height="3"/><rect x="3" y="5" width="2" height="5"/><rect x="6" y="3" width="2" height="7"/><rect x="9" y="0.5" width="2.5" height="9.5"/></g></svg>
<div class="t" style="left:725px;top:555.5px;font-size:9.1px;color:#111">141.72 ms</div>
<div class="ab" style="left:0;top:569px;width:800px;height:31px;background:linear-gradient(180deg,#6f82a6 0%,#5a6e96 18%,#53689a 60%,#4c6290 100%)"></div>
<div class="ab" style="left:0;top:568.5px;width:800px;height:2px;background:linear-gradient(180deg,#404a5a,#3c4c6c)"></div>
<svg style="left:5px;top:569px" width="32" height="31"><defs><linearGradient id="orbg" x1="0" y1="0" x2="0" y2="1"><stop offset="0" stop-color="#a8bccc"/><stop offset="0.42" stop-color="#5e80a4"/><stop offset="0.5" stop-color="#0c3c78"/><stop offset="0.78" stop-color="#0a62a8"/><stop offset="1" stop-color="#30d0f8"/></linearGradient></defs><circle cx="16" cy="15.5" r="14" fill="url(#orbg)" stroke="#9ab0c8" stroke-width="0.8"/><path d="M9.5 10.5 q3 -2 6 -0.5 l-1 5.5 q-3 -1.5 -6 0.5z" fill="#f05a20"/><path d="M16.5 10.5 q3 1.5 6 -0.2 l-1 5.7 q-3 1.5 -6 0z" fill="#8cc83a"/><path d="M8.3 17 q3 -2 6 -0.5 l-1 5.5 q-3 -1.5 -6 0.5z" fill="#30a8f0"/><path d="M15.3 17 q3 1.5 6 -0.2 l-1 5.7 q-3 1.5 -6 0z" fill="#f8c020"/></svg>
<svg style="left:55px;top:571px" width="28" height="28"><path d="M4 10.5 h13 q0 -6 -6.5 -6 q-6.5 0 -6.5 6z M4.2 13.5 q0.5 7 7 7 q4.5 0 6 -3.5 h-4.5 q-0.6 1 -1.8 1 q-2.6 0 -2.8 -4.5z" fill="none"/><circle cx="14" cy="15" r="9.5" fill="#3fb6ea"/><circle cx="14" cy="13.6" r="5" fill="#4d5f8a"/><rect x="8.5" y="14.5" width="16" height="3.2" fill="#4d5f8a"/><rect x="8" y="13.2" width="12" height="2" fill="#3fb6ea"/><path d="M3 24 q-2 -3 6 -11 q10 -9 16 -7 q2 1 -1 5" fill="none" stroke="#f2c01e" stroke-width="2.4"/></svg>
<svg style="left:105px;top:572px" width="26" height="26"><path d="M13 13 L3.04 7.25 A11.5 11.5 0 0 1 22.96 7.25 Z" fill="#db4437"/><path d="M13 13 L22.96 7.25 A11.5 11.5 0 0 1 13.00 24.50 Z" fill="#f4c20d"/><path d="M13 13 L13.00 24.50 A11.5 11.5 0 0 1 3.04 7.25 Z" fill="#0f9d58"/><circle cx="13" cy="13" r="5.4" fill="#fff"/><circle cx="13" cy="13" r="4.2" fill="#4285f4"/></svg>
<svg style="left:153px;top:571px" width="28" height="28"><path d="M2.5 5 h8 l2 2 h12.5 v17 h-22.5z" fill="#e8d088" stroke="#b89a50" stroke-width="0.7"/><rect x="5" y="5.5" width="17" height="9" fill="#f8f8f4" stroke="#c8c8c0" stroke-width="0.5"/><circle cx="7.5" cy="7.5" r="1" fill="#40b040"/><circle cx="12" cy="8" r="1" fill="#e04040"/><circle cx="17.5" cy="8.5" r="1" fill="#4080e0"/><path d="M1.5 11 h25 l-1 14 h-23z" fill="#f4e4a8" stroke="#c0a860" stroke-width="0.7"/><path d="M7 25 v-5 q0 -2 2 -2 h10 q2 0 2 2 v5 h-3 v-3.5 h-8 v3.5z" fill="#58b0e0"/></svg>
<svg style="left:203px;top:572px" width="26" height="26"><rect x="1.5" y="1.5" width="23" height="23" rx="2" fill="#1c3cc8" stroke="#0a1a70"/><rect x="6" y="2" width="13" height="7" fill="#e8e8e8"/><rect x="13" y="3" width="3" height="5" fill="#1c3cc8"/><rect x="4" y="12" width="18" height="11" fill="#fff"/><path d="M4 14.5h18M4 17.5h18M4 20.5h18" stroke="#d04040" stroke-width="1.2"/></svg>
<div class="ab" style="left:241px;top:570px;width:45px;height:30px;border:1px solid rgba(20,30,50,0.7);border-radius:2px;background:linear-gradient(180deg,rgba(255,255,255,0.35),rgba(255,255,255,0.12));box-shadow:inset 0 0 0 1px rgba(255,255,255,0.25)"></div>
<svg style="left:250px;top:571px" width="28" height="28"><defs><linearGradient id="opg" x1="0" y1="0" x2="0" y2="1"><stop offset="0" stop-color="#ff3040"/><stop offset="1" stop-color="#b00010"/></linearGradient></defs><path d="M14 1.5 a11 12.5 0 1 0 0.01 0z M14 4.5 a5 9.5 0 1 1 -0.01 0z" fill="url(#opg)" fill-rule="evenodd"/></svg>
<svg style="left:299px;top:571px" width="28" height="28"><path d="M14 2 q10 0 11 8.5 q0.8 7.5 -5 10 q-3 1.2 -7 1 l-4.5 4 v-4.8 q-5 -2 -5.5 -9.5 q0 -9.2 11 -9.2z" fill="#fff"/><path d="M14 3.8 q8.5 0 9.2 7 q0.6 6.3 -4.2 8.3 q-2.8 1 -6.3 0.8 l-3 2.8 v-3.6 q-4.3 -1.5 -4.8 -8 q0 -7.3 9.1 -7.3z" fill="#7360c8"/><path d="M9 8 q0.5 -1.3 1.6 -1.1 l1.6 2.3 q0.4 0.8 -0.6 1.5 q0.6 2.3 3 3.8 q0.8 -0.9 1.5 -0.5 l2.2 1.6 q0.2 1.2 -1.2 1.8 q-1.2 0.5 -3.2 -0.7 q-3.6 -2.3 -4.8 -6z" fill="#fff"/><path d="M15 7 q3.5 0.5 4 4 M15 5.2 q5.3 0.6 5.8 5.8 M15.2 9 q1.6 0.4 1.9 2" stroke="#fff" stroke-width="0.9" fill="none"/></svg>
<svg style="left:347px;top:571px" width="28" height="28"><defs><radialGradient id="ffg" cx="35%" cy="30%" r="80%"><stop offset="0" stop-color="#ffd23a"/><stop offset="0.45" stop-color="#ff7a1e"/><stop offset="0.8" stop-color="#f2344e"/><stop offset="1" stop-color="#d02070"/></radialGradient></defs><circle cx="14" cy="15.5" r="11" fill="url(#ffg)"/><path d="M17 2 q9 4 8.5 13 q-1 -5 -5 -7 q-1 -3 -3.5 -6z" fill="#ffcf3a"/><circle cx="15.5" cy="14" r="5.2" fill="#6a3ad0"/><path d="M5 9 q2 -4 6 -3 q-3 1 -3.5 4 q4 -1.5 6 2 q-3 0 -4 2 q-1 3 3 4.5 q-7 0 -7.5 -9.5z" fill="#ff8a2a"/></svg>
<div class="ab" style="left:385.5px;top:570px;width:45.5px;height:30px;border:1px solid rgba(20,30,50,0.6);border-radius:2px;background:linear-gradient(180deg,rgba(255,255,255,0.3),rgba(255,255,255,0.1));box-shadow:inset 0 0 0 1px rgba(255,255,255,0.18)"></div>
<div class="ab" style="left:434px;top:570px;width:42px;height:30px;border:1px solid rgba(20,30,50,0.6);border-radius:2px;background:linear-gradient(180deg,rgba(255,255,255,0.3),rgba(255,255,255,0.1));box-shadow:inset 0 0 0 1px rgba(255,255,255,0.18)"></div>
<div class="ab" style="left:482px;top:570px;width:46px;height:30px;border:1px solid rgba(20,30,50,0.6);border-radius:2px;background:linear-gradient(180deg,rgba(255,255,255,0.3),rgba(255,255,255,0.1));box-shadow:inset 0 0 0 1px rgba(255,255,255,0.18)"></div>
<svg style="left:397px;top:572px" width="24" height="24"><path d="M12 1.5 q3 0 3 3 q3 1 3.5 5 l-5 3 h-3 l-5 -3 q0.5 -4 3.5 -5 q0 -3 3 -3z" fill="#3aa848"/><path d="M2 20 q-1 -4 2 -7 q0 -3 3 -4 l5 4 v5 l-3 4 q-5 1 -7 -2z" fill="#e8c020"/><path d="M22 20 q1 -4 -2 -7 q0 -3 -3 -4 l-5 4 v5 l3 4 q5 1 7 -2z" fill="#2a9ad8"/><circle cx="12" cy="12.5" r="5" fill="#fff"/><circle cx="12" cy="12.5" r="3.8" fill="#f0a040"/><text x="9.6" y="15.8" font-size="7.5" font-weight="bold" fill="#fff" font-family="Liberation Sans">$</text></svg>
<svg style="left:442px;top:571px" width="28" height="28"><path d="M3 22 q0 -14 10 -18 q-5 5 -4 18z" fill="#a09890"/><path d="M13 4 q7 2 7 10 l-3 4 q1 -8 -4 -14z" fill="#c02828"/><path d="M11 6 l3 12" stroke="#e03030" stroke-width="2"/><text x="14" y="26" font-size="14" font-weight="bold" fill="#fff" stroke="#777" stroke-width="0.4" font-family="Liberation Sans">8</text></svg>
<svg style="left:491px;top:571px" width="28" height="28"><path d="M3 15 q0 -9 10 -10 q9 -1 10 6 q0 3 -3 3 q-3 0 -2 3 q1 3 -3 4 q-12 2 -12 -6z" fill="#e8e4dc" stroke="#a8a090" stroke-width="0.6"/><circle cx="8" cy="13" r="1.8" fill="#e03a2a"/><circle cx="10" cy="9" r="1.8" fill="#40b040"/><circle cx="14.5" cy="8" r="1.8" fill="#e8c020"/><circle cx="18.5" cy="9.5" r="1.6" fill="#2a80d8"/><path d="M12 25 L24 3" stroke="#d89a40" stroke-width="2.4"/><path d="M22.5 5.5 L25 1.5" stroke="#a86a20" stroke-width="2.6"/></svg>
<div class="t" style="left:633px;top:578.5px;font-size:9px;color:#f0f0f0;-webkit-text-stroke:0.05px #fff">EN</div>
<svg style="left:658px;top:581px" width="7" height="5"><path d="M0 4.5 L3.5 0.5 L7 4.5z" fill="#fff"/></svg>
<svg style="left:674px;top:579px" width="13" height="13"><rect x="0" y="0" width="13" height="13" rx="1.5" fill="#d82020"/><path d="M3 3 L10 9 M3 3 L4 8 M3 3 L8 4" stroke="#fff" stroke-width="1.2" fill="none"/></svg>
<svg style="left:692px;top:579px" width="13" height="13"><path d="M1 4.5h3l3.5 -3.5v11l-3.5 -3.5h-3z" fill="#f0f0f0"/><path d="M9 4 q2 2.5 0 5M10.5 2.5 q3.5 4 0 8" stroke="#f0f0f0" fill="none"/></svg>
<svg style="left:711px;top:579px" width="14" height="14"><rect x="3" y="3" width="10" height="7" fill="none" stroke="#f0f0f0" stroke-width="1.2"/><path d="M8 10v2M5 13h6M1 1v7" stroke="#f0f0f0" stroke-width="1.2"/></svg>
<div class="t" style="left:748px;top:573.5px;font-size:9.2px;color:#fff">21:32</div>
<div class="t" style="left:737px;top:587.5px;font-size:9.2px;color:#fff;transform:scaleX(0.94);transform-origin:0 0">13.07.2020</div>
<div class="ab" style="left:789px;top:569px;width:11px;height:31px;border-left:1px solid rgba(20,30,50,0.7);background:linear-gradient(180deg,rgba(255,255,255,0.25),rgba(255,255,255,0.08))"></div></body></html>
